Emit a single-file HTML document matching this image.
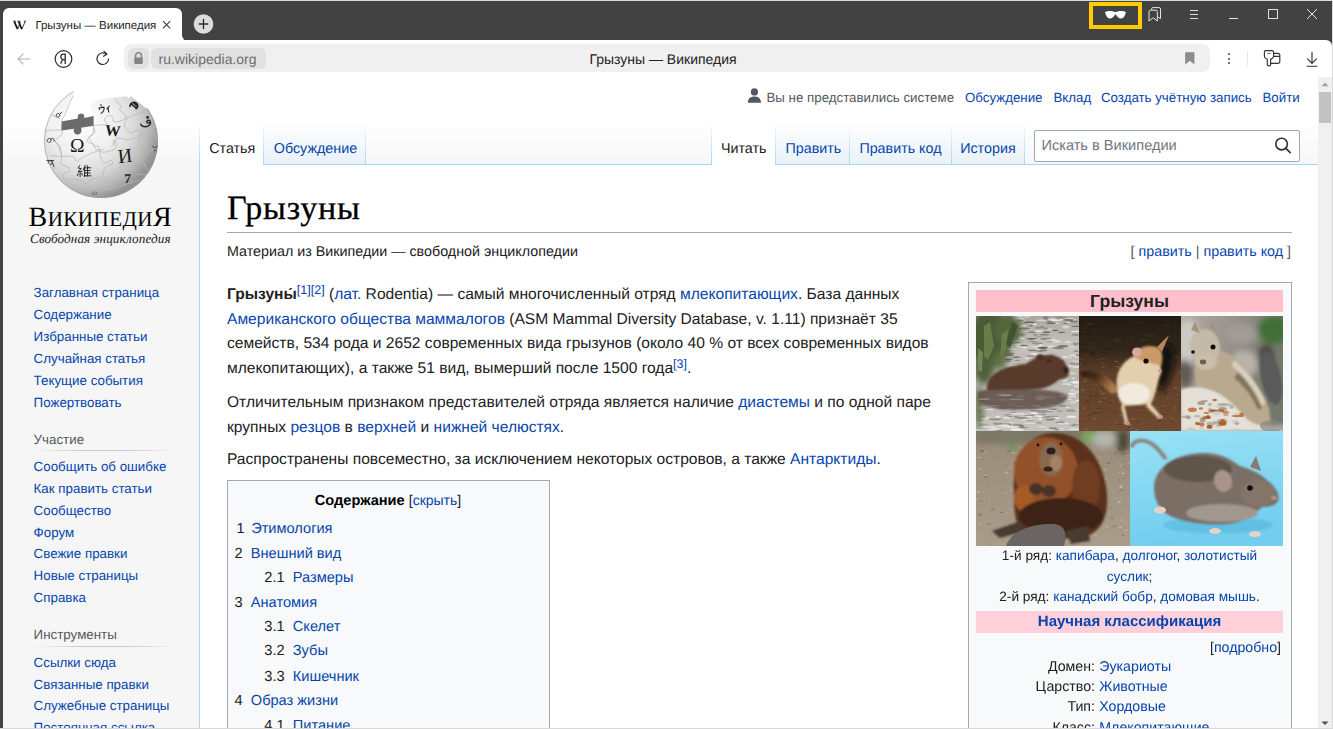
<!DOCTYPE html>
<html><head><meta charset="utf-8"><title>Грызуны — Википедия</title>
<style>
html,body{margin:0;padding:0;}
body{text-rendering:geometricPrecision;width:1333px;height:729px;overflow:hidden;position:relative;background:#424242;font-family:"Liberation Sans",sans-serif;}
.t{position:absolute;white-space:nowrap;}
.r{position:absolute;}
b{font-weight:bold;}
</style></head><body>
<div class="r" style="left:0px;top:0px;width:1333px;height:729px;background:#424242;"></div>
<div class="r" style="left:0px;top:0px;width:1333px;height:1px;background:#d9d9d9;"></div>
<div class="r" style="left:1332px;top:0px;width:1px;height:729px;background:#d9d9d9;"></div>
<div class="r" style="left:0px;top:728px;width:1333px;height:1px;background:#d9d9d9;"></div>
<div class="r" style="left:3px;top:8px;width:179px;height:33px;background:#ffffff;border-radius:6px 6px 0 0;"></div>
<div class="r" style="left:182px;top:34px;width:7px;height:7px;background:#ffffff;"></div>
<div class="r" style="left:182px;top:28px;width:7px;height:13px;background:#424242;border-bottom-left-radius:6px;"></div>
<div class="r" style="left:3px;top:40px;width:1329px;height:37px;background:#ffffff;border-top-right-radius:6px;"></div>
<div class="r" style="left:3px;top:40px;width:179px;height:2px;background:#ffffff;"></div>
<svg class="r" style="left:10px;top:16px" width="20" height="18" viewBox="0 0 20 18"><g fill="none" stroke="#111" stroke-linecap="butt"><path d="M4.3 5.6L7.6 13.2" stroke-width="1.7"/><path d="M7.6 13.2L10.4 5.6" stroke-width="0.8"/><path d="M8.6 5.6L11.8 13.2" stroke-width="1.7"/><path d="M11.8 13.2L15.3 5.3" stroke-width="0.8"/><path d="M3 5.2H6.2M7.4 5.2H10.2M13.8 5.2H16" stroke-width="0.8"/></g></svg>
<div class="t" style="left:35.4px;top:18.62px;font-size:11.5px;line-height:15px;color:#262626;font-family:'Liberation Sans', sans-serif;font-weight:normal;font-style:normal;">Грызуны — Википедия</div>
<svg class="r" style="left:160px;top:18px" width="14" height="14" viewBox="0 0 14 14"><path d="M3 3.2L10.2 10.4M10.2 3.2L3 10.4" stroke="#3a3a3a" stroke-width="1.1"/></svg>
<svg class="r" style="left:192px;top:13px" width="23" height="23" viewBox="0 0 23 23"><circle cx="11.5" cy="11" r="9.8" fill="#dcdcdc"/><path d="M11.5 6v10M6.8 11h9.4" stroke="#1e2a36" stroke-width="1.3"/></svg>
<div class="r" style="left:1089px;top:2px;width:45px;height:19px;background:transparent;border:4px solid #ffcc00;"></div>
<svg class="r" style="left:1100px;top:6px" width="32" height="16" viewBox="0 0 32 16"><path d="M4.8 6.3C6 5.2 9 4.9 11.5 5C13 5.1 14 5.6 14.8 6L16.2 6C17 5.6 18 5.1 19.5 5C22 4.9 25 5.2 26 6.3L25.4 7.8C24.7 11 23 12.5 21 12.5C19 12.5 17.2 11 16.6 9.5L15.5 8.2L14.4 9.5C13.8 11 12 12.5 10 12.5C8 12.5 6.3 11 5.6 7.8Z" fill="#ffffff"/></svg>
<svg class="r" style="left:1147px;top:6px" width="17" height="17" viewBox="0 0 17 17"><path d="M2 15V5.5C2 4.7 2.6 4.2 3.3 4.2H9C9.8 4.2 10.3 4.7 10.3 5.5V15L6.2 11.7Z" fill="none" stroke="#e6e6e6" stroke-width="1"/><path d="M4.6 3.8V2.8C4.6 2.1 5.1 1.6 5.8 1.6H12.2C13 1.6 13.5 2.1 13.5 2.8V12.6L10.6 11" fill="none" stroke="#e6e6e6" stroke-width="1"/></svg>
<div class="r" style="left:1190px;top:10px;width:8px;height:1px;background:#dddddd;"></div>
<div class="r" style="left:1190px;top:14px;width:8px;height:1px;background:#dddddd;"></div>
<div class="r" style="left:1190px;top:18px;width:8px;height:1px;background:#dddddd;"></div>
<div class="r" style="left:1229px;top:18px;width:9px;height:1px;background:#e0e0e0;"></div>
<div class="r" style="left:1268px;top:9px;width:8px;height:8px;background:transparent;border:1px solid #e0e0e0;"></div>
<svg class="r" style="left:1305px;top:7px" width="14" height="14" viewBox="0 0 14 14"><path d="M2 2L12 12M12 2L2 12" stroke="#e6e6e6" stroke-width="1"/></svg>
<svg class="r" style="left:14px;top:49px" width="20" height="20" viewBox="0 0 20 20"><path d="M16 10H4.2M9.5 4.6L4 10l5.5 5.4" fill="none" stroke="#b4b4b4" stroke-width="1.1"/></svg>
<svg class="r" style="left:53px;top:48px" width="22" height="22" viewBox="0 0 22 22"><circle cx="10.5" cy="11" r="8.3" fill="none" stroke="#2a2a2a" stroke-width="1.2"/><path d="M12.2 16V6.2H10.6C8.9 6.2 7.8 7.3 7.8 8.9C7.8 10.2 8.5 11 9.6 11.4L7.6 15.8M12.2 11.6H10" fill="none" stroke="#2a2a2a" stroke-width="1.3"/></svg>
<svg class="r" style="left:94px;top:48px" width="18" height="20" viewBox="0 0 18 20"><path d="M12.6 6.3A5.8 5.8 0 1 0 14.6 10.5" fill="none" stroke="#2a2a2a" stroke-width="1.2"/><path d="M9.6 2.8L12.9 6.1L9.2 8.4" fill="none" stroke="#2a2a2a" stroke-width="1.2"/></svg>
<div class="r" style="left:124px;top:44px;width:1086px;height:28px;background:#f0f0f0;border-radius:7px;"></div>
<div class="r" style="left:128px;top:48px;width:21px;height:21px;background:#e1e1e1;border-radius:6px;"></div>
<svg class="r" style="left:131px;top:50px" width="15" height="17" viewBox="0 0 15 17"><path d="M4.6 8V5.6C4.6 3.9 5.8 2.8 7.5 2.8C9.2 2.8 10.4 3.9 10.4 5.6V8" fill="none" stroke="#858585" stroke-width="1.5"/><rect x="3.2" y="7.6" width="8.6" height="6.4" rx="1" fill="#858585"/></svg>
<div class="r" style="left:151px;top:48px;width:115px;height:21px;background:#e1e1e1;border-radius:6px;"></div>
<div class="t" style="left:158.5px;top:50.15px;font-size:14px;line-height:18px;color:#6e6e6e;font-family:'Liberation Sans', sans-serif;font-weight:normal;font-style:normal;">ru.wikipedia.org</div>
<div class="t" style="left:663px;transform:translateX(-50%);top:50.35px;font-size:14px;line-height:18px;color:#222;font-family:'Liberation Sans', sans-serif;font-weight:normal;font-style:normal;">Грызуны — Википедия</div>
<svg class="r" style="left:1183px;top:50px" width="14" height="16" viewBox="0 0 14 16"><path d="M2.2 2.2H11.4V14.4L6.8 10.8L2.2 14.4Z" fill="#8c8c8c"/></svg>
<div class="r" style="left:1227.6px;top:52.9px;width:2.2px;height:2.2px;border-radius:50%;background:#444"></div>
<div class="r" style="left:1227.6px;top:57.699999999999996px;width:2.2px;height:2.2px;border-radius:50%;background:#444"></div>
<div class="r" style="left:1227.6px;top:62.3px;width:2.2px;height:2.2px;border-radius:50%;background:#444"></div>
<div class="r" style="left:1247px;top:51px;width:1px;height:15px;background:#e8e8e8;"></div>
<svg class="r" style="left:1256px;top:46px" width="32" height="24" viewBox="0 0 32 24"><path d="M9.6 4.6H16C17 4.6 17.6 5.3 17.6 6.3V10.2C17.6 11 17.2 11.6 16.4 12.2L14.6 13.4V18.4C14.6 19.2 13.9 19.8 13 19.8C12.1 19.8 11.3 19.2 11.3 18.4V13.4L9.4 12.1C8.7 11.6 8.4 11 8.4 10.2V6.1C8.4 5.2 8.8 4.6 9.6 4.6Z" fill="none" stroke="#333" stroke-width="1.15"/><path d="M11.2 7.4H14.8" stroke="#555" stroke-width="0.9"/><path d="M17.6 7.3H21.8C23 7.3 23.8 8.1 23.8 9.3V15.4C23.8 16.6 23 17.3 21.8 17.3H14.8M17.6 10.4H23.8" fill="none" stroke="#333" stroke-width="1.15"/></svg>
<svg class="r" style="left:1304px;top:50px" width="16" height="18" viewBox="0 0 16 18"><path d="M8 2V13.4M3.3 8.7L8 13.4L12.7 8.7M2.6 16.2H13.4" fill="none" stroke="#333" stroke-width="1.15"/></svg>
<div class="r" style="left:3px;top:77px;width:1315px;height:651px;background:#f6f6f6;"></div>
<div class="r" style="left:3px;top:77px;width:1315px;height:88px;background:linear-gradient(#ffffff 50%, #f6f6f6 100%);"></div>
<div class="r" style="left:199px;top:164px;width:1119px;height:564px;background:#ffffff;"></div>
<div class="r" style="left:199px;top:121px;width:1px;height:44px;background:linear-gradient(rgba(167,215,249,0), #a7d7f9);"></div>
<div class="r" style="left:199px;top:165px;width:1px;height:563px;background:#a7d7f9;"></div>
<div class="r" style="left:200px;top:164px;width:1118px;height:1px;background:#a7d7f9;"></div>
<div class="r" style="left:200px;top:121px;width:63px;height:44px;background:#ffffff;"></div>
<div class="t" style="left:209.2px;top:139.75px;font-size:14.3px;line-height:19px;color:#202122;font-family:'Liberation Sans', sans-serif;font-weight:normal;font-style:normal;">Статья</div>
<div class="r" style="left:263px;top:121px;width:1px;height:44px;background:linear-gradient(rgba(167,215,249,0) 0, #a7d7f9 100%);"></div>
<div class="r" style="left:264px;top:121px;width:101px;height:44px;background:linear-gradient(to top, #77c1f6 0, #e8f2f8 1px, #ffffff 100%);"></div>
<div class="t" style="left:273.8px;top:139.75px;font-size:14.3px;line-height:19px;color:#0645ad;font-family:'Liberation Sans', sans-serif;font-weight:normal;font-style:normal;">Обсуждение</div>
<div class="r" style="left:365px;top:121px;width:1px;height:44px;background:linear-gradient(rgba(167,215,249,0) 0, #a7d7f9 100%);"></div>
<div class="r" style="left:711px;top:121px;width:1px;height:44px;background:linear-gradient(rgba(167,215,249,0) 0, #a7d7f9 100%);"></div>
<div class="r" style="left:712px;top:121px;width:63px;height:44px;background:#ffffff;"></div>
<div class="t" style="left:720.9px;top:139.75px;font-size:14.3px;line-height:19px;color:#202122;font-family:'Liberation Sans', sans-serif;font-weight:normal;font-style:normal;">Читать</div>
<div class="r" style="left:775px;top:121px;width:1px;height:44px;background:linear-gradient(rgba(167,215,249,0) 0, #a7d7f9 100%);"></div>
<div class="r" style="left:776px;top:121px;width:73px;height:44px;background:linear-gradient(to top, #77c1f6 0, #e8f2f8 1px, #ffffff 100%);"></div>
<div class="t" style="left:785.5px;top:139.75px;font-size:14.3px;line-height:19px;color:#0645ad;font-family:'Liberation Sans', sans-serif;font-weight:normal;font-style:normal;">Править</div>
<div class="r" style="left:849px;top:121px;width:1px;height:44px;background:linear-gradient(rgba(167,215,249,0) 0, #a7d7f9 100%);"></div>
<div class="r" style="left:850px;top:121px;width:101px;height:44px;background:linear-gradient(to top, #77c1f6 0, #e8f2f8 1px, #ffffff 100%);"></div>
<div class="t" style="left:859.4px;top:139.75px;font-size:14.3px;line-height:19px;color:#0645ad;font-family:'Liberation Sans', sans-serif;font-weight:normal;font-style:normal;">Править код</div>
<div class="r" style="left:951px;top:121px;width:1px;height:44px;background:linear-gradient(rgba(167,215,249,0) 0, #a7d7f9 100%);"></div>
<div class="r" style="left:952px;top:121px;width:72px;height:44px;background:linear-gradient(to top, #77c1f6 0, #e8f2f8 1px, #ffffff 100%);"></div>
<div class="t" style="left:960.2px;top:139.75px;font-size:14.3px;line-height:19px;color:#0645ad;font-family:'Liberation Sans', sans-serif;font-weight:normal;font-style:normal;">История</div>
<div class="r" style="left:1024px;top:121px;width:1px;height:44px;background:linear-gradient(rgba(167,215,249,0) 0, #a7d7f9 100%);"></div>
<div class="r" style="left:1034px;top:130px;width:264px;height:30px;background:#ffffff;border:1px solid #a2a9b1;border-radius:2px;box-shadow: inset 0 0 0 1px transparent;"></div>
<div class="t" style="left:1041.4px;top:136.54px;font-size:14.6px;line-height:19px;color:#72777d;font-family:'Liberation Sans', sans-serif;font-weight:normal;font-style:normal;">Искать в Википедии</div>
<svg class="r" style="left:1272px;top:136px" width="22" height="22" viewBox="0 0 22 22"><circle cx="9.6" cy="8" r="5.8" fill="none" stroke="#333" stroke-width="1.65"/><path d="M13.9 12.3L18.2 16.6" stroke="#333" stroke-width="1.8" stroke-linecap="round"/></svg>
<svg class="r" style="left:747px;top:87px" width="15" height="17" viewBox="0 0 15 17"><circle cx="7.4" cy="4.9" r="3.6" fill="#54595d"/><path d="M0.8 15.8C0.8 11.6 3.4 9.6 7.4 9.6C11.4 9.6 14 11.6 14 15.8Z" fill="#54595d"/></svg>
<div class="t" style="left:766.5px;top:88.89px;font-size:13.3px;line-height:17px;color:#54595d;font-family:'Liberation Sans', sans-serif;font-weight:normal;font-style:normal;">Вы не представились системе</div>
<div class="t" style="left:965px;top:88.89px;font-size:13.3px;line-height:17px;color:#0645ad;font-family:'Liberation Sans', sans-serif;font-weight:normal;font-style:normal;">Обсуждение</div>
<div class="t" style="left:1053.5px;top:88.89px;font-size:13.3px;line-height:17px;color:#0645ad;font-family:'Liberation Sans', sans-serif;font-weight:normal;font-style:normal;">Вклад</div>
<div class="t" style="left:1101px;top:88.89px;font-size:13.3px;line-height:17px;color:#0645ad;font-family:'Liberation Sans', sans-serif;font-weight:normal;font-style:normal;">Создать учётную запись</div>
<div class="t" style="left:1262.5px;top:88.89px;font-size:13.3px;line-height:17px;color:#0645ad;font-family:'Liberation Sans', sans-serif;font-weight:normal;font-style:normal;">Войти</div>
<svg class="r" style="left:38px;top:84px" width="126" height="120" viewBox="38 84 126 120">
<defs>
<radialGradient id="gg" cx="82" cy="122" r="80" gradientUnits="userSpaceOnUse">
<stop offset="0" stop-color="#ffffff"/><stop offset="0.4" stop-color="#f0f0f0"/><stop offset="0.65" stop-color="#dadada"/><stop offset="0.85" stop-color="#b8b8b8"/><stop offset="1" stop-color="#909090"/>
</radialGradient>
<clipPath id="gc"><circle cx="101" cy="141" r="57"/></clipPath>
</defs>
<g clip-path="url(#gc)">
<rect x="38" y="84" width="126" height="120" fill="url(#gg)"/>
<g fill="none" stroke="#b9b9b9" stroke-width="0.8" stroke-linejoin="round"><path d="M93.5 125.5 C95.7 125.3 104.8 125.0 106.6 124.1 C108.4 123.2 104.4 121.4 104.5 120.0 C104.6 118.6 105.9 116.5 107.3 115.9 C108.7 115.3 111.7 115.7 112.7 116.6 C113.7 117.5 112.3 120.6 113.4 121.4 C114.5 122.2 116.9 122.0 119.2 121.4 C121.5 120.8 124.4 119.2 127.2 118.0 C130.0 116.8 132.5 115.8 136.0 114.5 C139.5 113.2 146.0 110.8 148.0 110.0"/><path d="M114.8 98.7 C115.5 99.6 117.8 102.8 118.9 104.2 C120.1 105.6 121.6 106.1 121.7 107.0 C121.8 107.9 119.1 108.6 119.6 109.7 C120.0 110.8 123.2 112.3 124.4 113.8 C125.6 115.3 126.5 116.8 126.5 118.6 C126.5 120.4 124.3 122.8 124.4 124.8 C124.5 126.8 126.0 128.9 127.2 130.3 C128.3 131.7 129.8 133.0 131.3 133.0 C132.8 133.0 134.6 130.6 136.0 130.3 C137.4 130.0 139.0 130.1 140.0 131.0 C141.0 131.9 142.2 134.5 142.0 136.0 C141.8 137.5 139.1 138.2 138.8 140.0 C138.6 141.8 139.4 145.4 140.5 146.8 C141.6 148.2 145.3 147.4 145.6 148.5 C145.9 149.6 142.6 151.5 142.2 153.6 C141.8 155.7 141.9 158.2 143.0 161.3 C144.1 164.4 148.0 170.5 149.0 172.3"/><path d="M92.9 125.5 C93.2 126.3 94.8 128.8 94.9 130.3 C95.0 131.8 94.5 133.2 93.5 134.4 C92.5 135.6 88.9 135.8 88.7 137.2 C88.5 138.6 91.1 141.1 92.2 142.6 C93.3 144.1 94.5 145.3 95.6 146.0 C96.7 146.7 98.1 145.0 98.9 146.8 C99.7 148.6 99.8 154.3 100.6 157.0 C101.4 159.7 102.3 162.4 104.0 163.0 C105.7 163.6 109.4 160.3 110.8 160.4 C112.2 160.5 113.3 162.7 112.5 163.8 C111.7 164.9 107.3 165.5 105.7 167.2 C104.1 168.9 103.0 171.9 103.1 174.0 C103.2 176.1 105.4 178.3 106.5 180.0 C107.6 181.7 109.6 182.8 109.9 184.2 C110.2 185.6 109.9 187.8 108.2 188.5 C106.5 189.2 101.7 187.2 99.7 188.5 C97.7 189.8 96.6 194.8 96.0 196.0"/><path d="M113.4 146.0 C113.6 145.1 113.9 142.0 114.8 140.6 C115.7 139.2 116.8 137.9 118.9 137.8 C121.0 137.7 124.4 140.0 127.2 139.9 C130.1 139.8 132.9 138.5 136.0 137.2 C139.1 135.9 142.7 133.9 146.0 132.0 C149.3 130.1 154.3 127.0 156.0 126.0"/><path d="M50.2 155.6 C52.3 155.8 58.8 156.3 62.6 156.5 C66.5 156.7 71.0 155.7 73.3 156.5 C75.6 157.3 75.2 161.1 76.6 161.4 C78.0 161.7 79.6 159.2 81.5 158.1 C83.4 157.0 85.3 156.0 88.1 154.8 C90.8 153.6 95.5 151.4 98.0 151.0 C100.5 150.6 101.1 152.3 103.1 152.3 C105.1 152.3 107.9 151.6 109.9 151.0 C111.9 150.4 113.9 149.8 115.0 148.5 C116.1 147.2 116.4 144.8 116.3 143.4 C116.2 142.0 114.7 139.6 114.2 140.0 C113.7 140.4 113.5 145.0 113.4 146.0"/><path d="M54.3 140.0 C55.0 141.1 57.2 143.8 58.5 146.6 C59.8 149.3 61.4 153.6 61.8 156.5 C62.2 159.4 59.9 162.1 61.0 163.9 C62.1 165.7 66.9 166.0 68.3 167.2 C69.7 168.4 69.9 170.4 69.2 171.3 C68.5 172.2 65.2 171.7 64.2 172.9 C63.2 174.1 62.6 177.0 63.4 178.7 C64.2 180.3 67.0 181.3 69.2 182.8 C71.4 184.3 74.8 185.5 76.6 187.7 C78.4 189.9 79.4 194.6 80.0 196.0"/><path d="M66.7 178.7 C69.0 179.0 77.6 179.5 80.7 180.3 C83.8 181.1 83.8 183.7 85.6 183.6 C87.4 183.5 88.7 180.6 91.4 179.5 C94.1 178.4 100.2 177.4 102.0 177.0"/><path d="M119.3 168.0 C120.0 167.4 121.4 165.1 123.5 164.7 C125.6 164.3 129.9 166.1 132.0 165.5 C134.1 164.9 134.3 162.4 136.3 161.3 C138.3 160.2 141.8 160.1 143.9 158.7 C146.0 157.3 146.8 154.9 149.0 152.8 C151.2 150.7 155.7 147.1 157.0 146.0"/><path d="M134.6 176.6 C135.3 176.2 137.2 174.3 138.8 174.0 C140.4 173.7 142.2 175.2 143.9 174.9 C145.6 174.6 146.7 173.5 149.0 172.3 C151.3 171.2 156.1 168.7 157.5 168.0"/><path d="M45.3 131.0 C46.6 130.8 50.6 130.2 53.2 130.1 C55.8 129.9 59.7 130.1 61.0 130.1"/><path d="M93.6 126.6 C93.4 127.8 93.4 131.9 92.7 133.7 C92.0 135.5 90.1 135.9 89.2 137.2 C88.3 138.5 86.8 140.4 87.4 141.6 C88.0 142.8 91.2 142.9 92.7 144.2 C94.2 145.5 94.3 148.6 96.2 149.5 C98.1 150.4 102.7 149.5 104.0 149.5"/><path d="M61.5 126.6 C61.6 127.8 62.6 131.8 62.0 133.7 C61.4 135.6 58.8 136.6 57.6 138.0 C56.4 139.4 54.6 141.2 54.9 142.4 C55.2 143.6 58.3 143.4 59.3 145.0 C60.3 146.6 60.7 150.1 61.1 152.0 C61.5 153.9 61.7 155.8 61.8 156.5"/><path d="M50.5 114.3 C52.1 115.0 58.6 118.0 60.2 118.7"/><path d="M60.0 192.0 C63.3 191.7 73.3 190.2 80.0 190.0 C86.7 189.8 93.3 191.7 100.0 191.0 C106.7 190.3 113.3 187.8 120.0 186.0 C126.7 184.2 136.7 181.0 140.0 180.0"/><path d="M146.0 108.0 C146.7 109.7 149.8 115.3 150.0 118.0 C150.2 120.7 146.7 122.0 147.0 124.0 C147.3 126.0 150.3 127.3 152.0 130.0 C153.7 132.7 156.2 138.3 157.0 140.0"/></g>
<path d="M73.4 96.3 L70 103 L65.5 114.3 L61.5 121.4" fill="none" stroke="#b5b5b5" stroke-width="1.2"/>
</g>
<circle cx="101" cy="141" r="56.6" fill="none" stroke="#9c9c9c" stroke-width="0.9" opacity="0.7"/>
<path d="M30 84 H73.4 V96.3 L70 103 L65.5 114.3 L61.5 121.4 L93.6 116 L90 105.6 L98 99.4 L126.7 96.3 L128.5 98.5 L131 96 L146 108.2 L172 108 V84 Z" fill="#ffffff" id="wo"/>
<path d="M61.5 121.4 L78 118.6 C77.5 116.5 77.6 114 81 113.6 C84.5 113.6 84.6 116.5 84 118 L93.6 116 L93.6 125.8 L81 127.8 C82 129.5 81.8 134.5 77.5 134.6 C73.8 134.5 73.3 130 74 128.7 L61.5 130.4 Z" fill="#6b6b6b"/>
<path d="M62 128 C60 150 58 170 60 181" fill="none" stroke="none"/>
<g fill="none" stroke="#202020" stroke-linecap="round" stroke-linejoin="round">
<g stroke-width="0.95"><path d="M79.6 165.6L78.3 168.2L81.2 168.6L78 171.8L82.2 171.2M80.1 171.5V176.6M78.2 173.6L77.4 175.6M81.6 173.4L82.6 175.2"/>
<path d="M85.2 165.4L83.4 169.6M84.6 168.4V176.6M87.2 165.6L88 167.2M84.6 167.8H90.8M87.5 167.8V176.2M84.6 170.5H90.2M84.6 173H90.2M84.6 175.8H91"/></g>
<g stroke-width="1.05" transform="rotate(-10 106 108)"><path d="M101.6 103.6V105.2M99.2 106.8V108.4M99.2 106.8H104.2C104.2 109.6 102.8 111.4 100.2 112.4M106.8 109L109.6 106.6M108 108.2V112.6"/></g>
<g stroke-width="1.5"><path d="M130 106.5C130 102.5 134 101.5 136.2 103C138.4 104.5 138.2 107.8 136 108.8M131.5 104.2L136.4 108.2M133.4 102.6L137.8 106.6"/></g>
<g stroke-width="1.4"><path d="M140.8 124.2C141.4 127.2 146.4 127.4 149.4 125.2C151 124 150.8 121.2 149.2 120.4C147.6 119.6 146.2 121.2 147.2 122.6C148.2 123.6 149.8 123.2 150.4 122"/><circle cx="147.6" cy="117.4" r="0.6" fill="#202020"/></g>
<g stroke="#3a3a3a" stroke-width="1.0"><path d="M47.2 141.5C46.8 138.5 49.6 137.6 50.8 139.4C51.8 141 50.4 143 48.8 142.4M50.6 139.6C52 137 54.6 138.2 54 141"/>
<path d="M48.2 163C48 160.4 50.8 159.8 52 161.6C52.8 163 51.6 165 50 164.4M46.8 160.6H53.6M52 161.6L54 166.8"/>
<path d="M152.6 146.2C153.6 148.6 156.6 148.2 157 146M154.2 150.4L154.6 150.6M155.8 150.6L156.2 150.8"/>
<path d="M56.2 116.4C55.6 113.6 58.6 112.6 59.6 114.4C60.4 116 59 117.4 57.8 116.8M59.6 114.4L61.6 112.2"/></g>
</g>
<text x="77.3" y="152.4" font-family="Liberation Serif" font-size="19.5" text-anchor="middle" fill="#1a1a1a">Ω</text>
<text x="112.7" y="135.9" font-family="Liberation Serif" font-size="15.5" font-weight="bold" text-anchor="middle" fill="#1a1a1a" transform="rotate(6 112.7 131)">W</text>
<text x="125" y="162.6" font-family="Liberation Serif" font-size="20" text-anchor="middle" fill="#1a1a1a" transform="rotate(-6 125 156)">И</text>
<text x="127.5" y="183.4" font-family="Liberation Serif" font-weight="bold" font-size="13.5" text-anchor="middle" fill="#1e1e1e">7</text>
<text x="92" y="195" font-family="Liberation Serif" font-size="8" fill="#555">ω</text>
</svg>
<div class="t" style="left:29px;top:200px;width:143px;height:30px;color:#000;white-space:nowrap;"></div>
<div class="t" style="left:28.5px;top:200.05px;font-size:28px;line-height:36px;color:#000;font-family:'Liberation Serif', serif;font-weight:normal;font-style:normal;letter-spacing:0.5px;"><span>В</span><span style="font-size:21px">ИКИПЕДИ</span><span>Я</span></div>
<div class="t" style="left:30px;top:230.04px;font-size:13.2px;line-height:17px;color:#222;font-family:'Liberation Serif', serif;font-weight:normal;font-style:italic;letter-spacing:0.08px;">Свободная энциклопедия</div>
<div class="t" style="left:33.6px;top:284.27px;font-size:13.35px;line-height:17px;color:#0645ad;font-family:'Liberation Sans', sans-serif;font-weight:normal;font-style:normal;">Заглавная страница</div>
<div class="t" style="left:33.6px;top:306.13px;font-size:13.35px;line-height:17px;color:#0645ad;font-family:'Liberation Sans', sans-serif;font-weight:normal;font-style:normal;">Содержание</div>
<div class="t" style="left:33.6px;top:327.99px;font-size:13.35px;line-height:17px;color:#0645ad;font-family:'Liberation Sans', sans-serif;font-weight:normal;font-style:normal;">Избранные статьи</div>
<div class="t" style="left:33.6px;top:349.85px;font-size:13.35px;line-height:17px;color:#0645ad;font-family:'Liberation Sans', sans-serif;font-weight:normal;font-style:normal;">Случайная статья</div>
<div class="t" style="left:33.6px;top:371.71px;font-size:13.35px;line-height:17px;color:#0645ad;font-family:'Liberation Sans', sans-serif;font-weight:normal;font-style:normal;">Текущие события</div>
<div class="t" style="left:33.6px;top:393.57px;font-size:13.35px;line-height:17px;color:#0645ad;font-family:'Liberation Sans', sans-serif;font-weight:normal;font-style:normal;">Пожертвовать</div>
<div class="t" style="left:33.6px;top:430.57px;font-size:13.35px;line-height:17px;color:#54595d;font-family:'Liberation Sans', sans-serif;font-weight:normal;font-style:normal;">Участие</div>
<div class="r" style="left:33px;top:450px;width:144px;height:1px;background:linear-gradient(to right, rgba(200,204,209,0) 0, #c8ccd1 33%, #c8ccd1 66%, rgba(200,204,209,0) 100%);"></div>
<div class="t" style="left:33.6px;top:458.37px;font-size:13.35px;line-height:17px;color:#0645ad;font-family:'Liberation Sans', sans-serif;font-weight:normal;font-style:normal;">Сообщить об ошибке</div>
<div class="t" style="left:33.6px;top:480.09px;font-size:13.35px;line-height:17px;color:#0645ad;font-family:'Liberation Sans', sans-serif;font-weight:normal;font-style:normal;">Как править статьи</div>
<div class="t" style="left:33.6px;top:501.81px;font-size:13.35px;line-height:17px;color:#0645ad;font-family:'Liberation Sans', sans-serif;font-weight:normal;font-style:normal;">Сообщество</div>
<div class="t" style="left:33.6px;top:523.53px;font-size:13.35px;line-height:17px;color:#0645ad;font-family:'Liberation Sans', sans-serif;font-weight:normal;font-style:normal;">Форум</div>
<div class="t" style="left:33.6px;top:545.25px;font-size:13.35px;line-height:17px;color:#0645ad;font-family:'Liberation Sans', sans-serif;font-weight:normal;font-style:normal;">Свежие правки</div>
<div class="t" style="left:33.6px;top:566.97px;font-size:13.35px;line-height:17px;color:#0645ad;font-family:'Liberation Sans', sans-serif;font-weight:normal;font-style:normal;">Новые страницы</div>
<div class="t" style="left:33.6px;top:588.69px;font-size:13.35px;line-height:17px;color:#0645ad;font-family:'Liberation Sans', sans-serif;font-weight:normal;font-style:normal;">Справка</div>
<div class="t" style="left:33.6px;top:625.67px;font-size:13.35px;line-height:17px;color:#54595d;font-family:'Liberation Sans', sans-serif;font-weight:normal;font-style:normal;">Инструменты</div>
<div class="r" style="left:33px;top:646px;width:144px;height:1px;background:linear-gradient(to right, rgba(200,204,209,0) 0, #c8ccd1 33%, #c8ccd1 66%, rgba(200,204,209,0) 100%);"></div>
<div class="t" style="left:33.6px;top:653.87px;font-size:13.35px;line-height:17px;color:#0645ad;font-family:'Liberation Sans', sans-serif;font-weight:normal;font-style:normal;">Ссылки сюда</div>
<div class="t" style="left:33.6px;top:675.67px;font-size:13.35px;line-height:17px;color:#0645ad;font-family:'Liberation Sans', sans-serif;font-weight:normal;font-style:normal;">Связанные правки</div>
<div class="t" style="left:33.6px;top:697.47px;font-size:13.35px;line-height:17px;color:#0645ad;font-family:'Liberation Sans', sans-serif;font-weight:normal;font-style:normal;">Служебные страницы</div>
<div class="t" style="left:33.6px;top:719.27px;font-size:13.35px;line-height:17px;color:#0645ad;font-family:'Liberation Sans', sans-serif;font-weight:normal;font-style:normal;">Постоянная ссылка</div>
<div class="t" style="left:227px;top:187.33px;font-size:34px;line-height:44px;color:#000;font-family:'Liberation Serif', serif;font-weight:normal;font-style:normal;letter-spacing:0.8px;-webkit-text-stroke:0.3px #000;">Грызуны</div>
<div class="r" style="left:227px;top:232px;width:1065px;height:1px;background:#a2a9b1;"></div>
<div class="t" style="left:227px;top:243.35px;font-size:14.3px;line-height:19px;color:#202122;font-family:'Liberation Sans', sans-serif;font-weight:normal;font-style:normal;">Материал из Википедии — свободной энциклопедии</div>
<div class="t" style="right:42px;top:243.15px;font-size:14.3px;line-height:19px;color:#202122;font-family:'Liberation Sans', sans-serif;font-weight:normal;font-style:normal;"><span style="color:#54595d">[</span> <span style="color:#0645ad">править</span> <span style="color:#54595d">|</span> <span style="color:#0645ad">править код</span> <span style="color:#54595d">]</span></div>
<div class="t" style="left:227px;top:285.10px;font-size:15.58px;line-height:20px;color:#202122;font-family:'Liberation Sans', sans-serif;font-weight:normal;font-style:normal;"><b>Грызуны́</b><sup style="font-size:12.5px;line-height:0;vertical-align:5.4px;color:#0645ad">[1]</sup><sup style="font-size:12.5px;line-height:0;vertical-align:5.4px;color:#0645ad">[2]</sup> (<span style="color:#0645ad">лат.</span> Rodentia) — самый многочисленный отряд <span style="color:#0645ad">млекопитающих</span>. База данных</div>
<div class="t" style="left:227px;top:309.70px;font-size:15.58px;line-height:20px;color:#202122;font-family:'Liberation Sans', sans-serif;font-weight:normal;font-style:normal;"><span style="color:#0645ad">Американского общества маммалогов</span> (ASM Mammal Diversity Database, v. 1.11) признаёт 35</div>
<div class="t" style="left:227px;top:334.30px;font-size:15.58px;line-height:20px;color:#202122;font-family:'Liberation Sans', sans-serif;font-weight:normal;font-style:normal;">семейств, 534 рода и 2652 современных вида грызунов (около 40 % от всех современных видов</div>
<div class="t" style="left:227px;top:358.90px;font-size:15.58px;line-height:20px;color:#202122;font-family:'Liberation Sans', sans-serif;font-weight:normal;font-style:normal;">млекопитающих), а также 51 вид, вымерший после 1500 года<sup style="font-size:12.5px;line-height:0;vertical-align:5.4px;color:#0645ad">[3]</sup>.</div>
<div class="t" style="left:227px;top:392.80px;font-size:15.58px;line-height:20px;color:#202122;font-family:'Liberation Sans', sans-serif;font-weight:normal;font-style:normal;">Отличительным признаком представителей отряда является наличие <span style="color:#0645ad">диастемы</span> и по одной паре</div>
<div class="t" style="left:227px;top:417.60px;font-size:15.58px;line-height:20px;color:#202122;font-family:'Liberation Sans', sans-serif;font-weight:normal;font-style:normal;">крупных <span style="color:#0645ad">резцов</span> в <span style="color:#0645ad">верхней</span> и <span style="color:#0645ad">нижней челюстях</span>.</div>
<div class="t" style="left:227px;top:450.20px;font-size:15.58px;line-height:20px;color:#202122;font-family:'Liberation Sans', sans-serif;font-weight:normal;font-style:normal;">Распространены повсеместно, за исключением некоторых островов, а также <span style="color:#0645ad">Антарктиды</span>.</div>
<div class="r" style="left:227px;top:480px;width:321px;height:260px;background:#f8f9fa;border:1px solid #a2a9b1;"></div>
<div class="t" style="left:388px;transform:translateX(-50%);top:490.64px;font-size:14.6px;line-height:19px;color:#202122;font-family:'Liberation Sans', sans-serif;font-weight:normal;font-style:normal;"><b style="color:#000">Содержание</b> <span style="font-size:14px">[<span style="color:#0645ad">скрыть</span>]</span></div>
<div class="t" style="left:236.5px;top:519.94px;font-size:14.6px;line-height:19px;color:#202122;font-family:'Liberation Sans', sans-serif;font-weight:normal;font-style:normal;">1</div>
<div class="t" style="left:251.2px;top:519.94px;font-size:14.6px;line-height:19px;color:#0645ad;font-family:'Liberation Sans', sans-serif;font-weight:normal;font-style:normal;">Этимология</div>
<div class="t" style="left:234.5px;top:544.94px;font-size:14.6px;line-height:19px;color:#202122;font-family:'Liberation Sans', sans-serif;font-weight:normal;font-style:normal;">2</div>
<div class="t" style="left:250.8px;top:544.94px;font-size:14.6px;line-height:19px;color:#0645ad;font-family:'Liberation Sans', sans-serif;font-weight:normal;font-style:normal;">Внешний вид</div>
<div class="t" style="left:264.3px;top:569.04px;font-size:14.6px;line-height:19px;color:#202122;font-family:'Liberation Sans', sans-serif;font-weight:normal;font-style:normal;">2.1</div>
<div class="t" style="left:292.8px;top:569.04px;font-size:14.6px;line-height:19px;color:#0645ad;font-family:'Liberation Sans', sans-serif;font-weight:normal;font-style:normal;">Размеры</div>
<div class="t" style="left:234.5px;top:594.14px;font-size:14.6px;line-height:19px;color:#202122;font-family:'Liberation Sans', sans-serif;font-weight:normal;font-style:normal;">3</div>
<div class="t" style="left:250.8px;top:594.14px;font-size:14.6px;line-height:19px;color:#0645ad;font-family:'Liberation Sans', sans-serif;font-weight:normal;font-style:normal;">Анатомия</div>
<div class="t" style="left:264.3px;top:618.24px;font-size:14.6px;line-height:19px;color:#202122;font-family:'Liberation Sans', sans-serif;font-weight:normal;font-style:normal;">3.1</div>
<div class="t" style="left:292.8px;top:618.24px;font-size:14.6px;line-height:19px;color:#0645ad;font-family:'Liberation Sans', sans-serif;font-weight:normal;font-style:normal;">Скелет</div>
<div class="t" style="left:264.3px;top:642.44px;font-size:14.6px;line-height:19px;color:#202122;font-family:'Liberation Sans', sans-serif;font-weight:normal;font-style:normal;">3.2</div>
<div class="t" style="left:292.8px;top:642.44px;font-size:14.6px;line-height:19px;color:#0645ad;font-family:'Liberation Sans', sans-serif;font-weight:normal;font-style:normal;">Зубы</div>
<div class="t" style="left:264.3px;top:667.54px;font-size:14.6px;line-height:19px;color:#202122;font-family:'Liberation Sans', sans-serif;font-weight:normal;font-style:normal;">3.3</div>
<div class="t" style="left:292.8px;top:667.54px;font-size:14.6px;line-height:19px;color:#0645ad;font-family:'Liberation Sans', sans-serif;font-weight:normal;font-style:normal;">Кишечник</div>
<div class="t" style="left:234.5px;top:692.24px;font-size:14.6px;line-height:19px;color:#202122;font-family:'Liberation Sans', sans-serif;font-weight:normal;font-style:normal;">4</div>
<div class="t" style="left:250.8px;top:692.24px;font-size:14.6px;line-height:19px;color:#0645ad;font-family:'Liberation Sans', sans-serif;font-weight:normal;font-style:normal;">Образ жизни</div>
<div class="t" style="left:264.3px;top:716.74px;font-size:14.6px;line-height:19px;color:#202122;font-family:'Liberation Sans', sans-serif;font-weight:normal;font-style:normal;">4.1</div>
<div class="t" style="left:292.8px;top:716.74px;font-size:14.6px;line-height:19px;color:#0645ad;font-family:'Liberation Sans', sans-serif;font-weight:normal;font-style:normal;">Питание</div>
<div class="r" style="left:968px;top:282px;width:322px;height:460px;background:#f8f9fa;border:1px solid #a2a9b1;"></div>
<div class="r" style="left:976px;top:290px;width:307px;height:22px;background:#ffc0cb;"></div>
<div class="t" style="left:1129.5px;transform:translateX(-50%);top:290.00px;font-size:17.6px;line-height:23px;color:#202122;font-family:'Liberation Sans', sans-serif;font-weight:normal;font-style:normal;"><b>Грызуны</b></div>
<svg class="r" style="left:976px;top:316px" width="307" height="230" viewBox="0 0 307 230">
<defs>
<filter id="b1" x="-30%" y="-30%" width="160%" height="160%"><feGaussianBlur stdDeviation="1.3"/></filter>
<filter id="b2" x="-30%" y="-30%" width="160%" height="160%"><feGaussianBlur stdDeviation="3"/></filter>
<filter id="b05" x="-30%" y="-30%" width="160%" height="160%"><feGaussianBlur stdDeviation="0.55"/></filter>
<clipPath id="c1"><rect x="0" y="0" width="103" height="115"/></clipPath>
<clipPath id="c2"><rect x="103" y="0" width="102" height="115"/></clipPath>
<clipPath id="c3"><rect x="205" y="0" width="102" height="115"/></clipPath>
<clipPath id="c4"><rect x="0" y="115" width="154" height="115"/></clipPath>
<clipPath id="c5"><rect x="154" y="115" width="153" height="115"/></clipPath>
<linearGradient id="wat" x1="0" y1="0" x2="0" y2="1"><stop offset="0" stop-color="#a9a69e"/><stop offset="0.25" stop-color="#c4c2bc"/><stop offset="0.55" stop-color="#b8b4ae"/><stop offset="1" stop-color="#c6c4c0"/></linearGradient>
<linearGradient id="gnd" x1="0" y1="0" x2="0" y2="1"><stop offset="0" stop-color="#221b14"/><stop offset="0.3" stop-color="#33271b"/><stop offset="0.5" stop-color="#5e3f29"/><stop offset="1" stop-color="#6e4a30"/></linearGradient>
<linearGradient id="sqb" x1="0" y1="0" x2="1" y2="0.3"><stop offset="0" stop-color="#b2aca4"/><stop offset="0.5" stop-color="#96918a"/><stop offset="1" stop-color="#74786a"/></linearGradient>
<linearGradient id="bvg" x1="0" y1="0" x2="0" y2="1"><stop offset="0" stop-color="#7e7868"/><stop offset="0.15" stop-color="#9c8e7c"/><stop offset="1" stop-color="#aa9c8a"/></linearGradient>
<linearGradient id="msb" x1="0" y1="0" x2="0.2" y2="1"><stop offset="0" stop-color="#98e2f6"/><stop offset="1" stop-color="#72cdee"/></linearGradient>
<linearGradient id="tailg" x1="0" y1="0" x2="1" y2="0.4"><stop offset="0" stop-color="#2a1c12"/><stop offset="0.45" stop-color="#4a2e1a"/><stop offset="1" stop-color="#b07a48"/></linearGradient>
</defs>
<g clip-path="url(#c1)"><rect x="0" y="0" width="103" height="115" fill="url(#wat)"/><g filter="url(#b05)"><ellipse cx="53.6" cy="7.5" rx="2.3" ry="0.8" fill="#e8e8e6" opacity="0.65"/><ellipse cx="34.2" cy="25.4" rx="2.3" ry="0.8" fill="#e8e8e6" opacity="0.60"/><ellipse cx="70.2" cy="3.0" rx="2.5" ry="0.6" fill="#55524a" opacity="0.75"/><ellipse cx="99.2" cy="28.9" rx="2.2" ry="0.6" fill="#7e7a70" opacity="0.72"/><ellipse cx="39.7" cy="21.0" rx="2.5" ry="0.7" fill="#55524a" opacity="0.83"/><ellipse cx="43.2" cy="29.1" rx="3.5" ry="0.8" fill="#f4f4f2" opacity="0.53"/><ellipse cx="34.4" cy="10.3" rx="3.7" ry="0.7" fill="#55524a" opacity="0.73"/><ellipse cx="63.1" cy="15.0" rx="4.8" ry="0.6" fill="#f4f4f2" opacity="0.73"/><ellipse cx="68.3" cy="43.8" rx="3.2" ry="1.1" fill="#7e7a70" opacity="0.55"/><ellipse cx="60.5" cy="37.9" rx="5.7" ry="0.8" fill="#f4f4f2" opacity="0.88"/><ellipse cx="35.7" cy="27.9" rx="3.4" ry="0.7" fill="#6a665c" opacity="0.70"/><ellipse cx="88.2" cy="3.4" rx="5.8" ry="0.8" fill="#e8e8e6" opacity="0.77"/><ellipse cx="34.4" cy="35.1" rx="6.0" ry="1.0" fill="#55524a" opacity="0.61"/><ellipse cx="58.2" cy="33.4" rx="5.8" ry="0.7" fill="#e8e8e6" opacity="0.74"/><ellipse cx="66.0" cy="10.9" rx="2.5" ry="0.6" fill="#6a665c" opacity="0.66"/><ellipse cx="93.6" cy="4.0" rx="3.6" ry="0.7" fill="#7e7a70" opacity="0.55"/><ellipse cx="61.4" cy="27.5" rx="5.9" ry="0.9" fill="#7e7a70" opacity="0.65"/><ellipse cx="46.8" cy="4.1" rx="2.9" ry="0.6" fill="#f4f4f2" opacity="0.69"/><ellipse cx="73.0" cy="13.1" rx="2.6" ry="0.8" fill="#e8e8e6" opacity="0.74"/><ellipse cx="53.3" cy="6.3" rx="5.8" ry="0.9" fill="#55524a" opacity="0.80"/><ellipse cx="63.3" cy="43.5" rx="3.6" ry="0.7" fill="#55524a" opacity="0.54"/><ellipse cx="76.3" cy="3.1" rx="5.9" ry="0.8" fill="#e8e8e6" opacity="0.54"/><ellipse cx="73.9" cy="5.1" rx="2.6" ry="0.6" fill="#55524a" opacity="0.65"/><ellipse cx="31.9" cy="43.7" rx="3.5" ry="0.9" fill="#55524a" opacity="0.88"/><ellipse cx="74.0" cy="23.7" rx="5.4" ry="1.1" fill="#e8e8e6" opacity="0.69"/><ellipse cx="65.3" cy="4.3" rx="5.0" ry="0.9" fill="#e8e8e6" opacity="0.69"/><ellipse cx="80.5" cy="25.8" rx="5.8" ry="0.8" fill="#f4f4f2" opacity="0.56"/><ellipse cx="69.7" cy="1.4" rx="3.2" ry="0.9" fill="#55524a" opacity="0.54"/><ellipse cx="91.7" cy="25.9" rx="3.4" ry="0.6" fill="#f4f4f2" opacity="0.72"/><ellipse cx="66.7" cy="31.8" rx="5.2" ry="1.1" fill="#55524a" opacity="0.84"/><ellipse cx="88.8" cy="40.9" rx="2.8" ry="0.8" fill="#f4f4f2" opacity="0.79"/><ellipse cx="102.2" cy="39.5" rx="3.0" ry="0.9" fill="#7e7a70" opacity="0.88"/><ellipse cx="62.6" cy="46.9" rx="5.8" ry="0.7" fill="#6a665c" opacity="0.59"/><ellipse cx="46.6" cy="9.8" rx="3.9" ry="1.1" fill="#f4f4f2" opacity="0.74"/><ellipse cx="30.1" cy="45.5" rx="5.2" ry="0.6" fill="#6a665c" opacity="0.76"/><ellipse cx="96.4" cy="39.1" rx="3.9" ry="0.6" fill="#f4f4f2" opacity="0.82"/><ellipse cx="54.3" cy="40.0" rx="3.9" ry="0.9" fill="#7e7a70" opacity="0.53"/><ellipse cx="41.6" cy="49.7" rx="2.6" ry="1.0" fill="#e8e8e6" opacity="0.82"/><ellipse cx="40.7" cy="41.3" rx="4.6" ry="0.7" fill="#7e7a70" opacity="0.72"/><ellipse cx="39.6" cy="0.7" rx="4.1" ry="1.1" fill="#e8e8e6" opacity="0.67"/><ellipse cx="93.6" cy="41.3" rx="2.1" ry="0.6" fill="#f4f4f2" opacity="0.70"/><ellipse cx="85.7" cy="16.3" rx="3.7" ry="0.6" fill="#55524a" opacity="0.86"/><ellipse cx="55.8" cy="22.9" rx="5.3" ry="0.8" fill="#55524a" opacity="0.83"/><ellipse cx="94.1" cy="6.5" rx="4.1" ry="0.5" fill="#f4f4f2" opacity="0.68"/><ellipse cx="43.4" cy="0.2" rx="2.7" ry="0.8" fill="#f4f4f2" opacity="0.79"/><ellipse cx="70.6" cy="16.3" rx="4.1" ry="0.8" fill="#55524a" opacity="0.81"/><ellipse cx="94.5" cy="2.8" rx="3.1" ry="1.0" fill="#f4f4f2" opacity="0.70"/><ellipse cx="71.0" cy="38.0" rx="3.8" ry="0.9" fill="#e8e8e6" opacity="0.70"/><ellipse cx="67.4" cy="34.6" rx="4.0" ry="1.0" fill="#7e7a70" opacity="0.70"/><ellipse cx="48.1" cy="26.2" rx="5.7" ry="1.0" fill="#6a665c" opacity="0.58"/><ellipse cx="62.7" cy="20.8" rx="3.8" ry="0.5" fill="#7e7a70" opacity="0.60"/><ellipse cx="35.3" cy="33.5" rx="5.6" ry="0.6" fill="#e8e8e6" opacity="0.79"/><ellipse cx="78.2" cy="7.1" rx="5.9" ry="0.6" fill="#f4f4f2" opacity="0.88"/><ellipse cx="59.1" cy="24.4" rx="2.6" ry="0.8" fill="#f4f4f2" opacity="0.71"/><ellipse cx="54.8" cy="9.8" rx="2.4" ry="0.7" fill="#6a665c" opacity="0.64"/><ellipse cx="63.5" cy="35.2" rx="3.3" ry="0.9" fill="#7e7a70" opacity="0.70"/><ellipse cx="34.7" cy="49.3" rx="5.9" ry="0.6" fill="#f4f4f2" opacity="0.61"/><ellipse cx="32.9" cy="38.9" rx="5.0" ry="1.0" fill="#6a665c" opacity="0.84"/><ellipse cx="79.3" cy="47.3" rx="2.6" ry="1.1" fill="#7e7a70" opacity="0.73"/><ellipse cx="81.1" cy="4.5" rx="5.2" ry="0.6" fill="#e8e8e6" opacity="0.86"/><ellipse cx="49.6" cy="0.8" rx="5.2" ry="0.6" fill="#e8e8e6" opacity="0.84"/><ellipse cx="34.9" cy="43.1" rx="2.0" ry="1.1" fill="#7e7a70" opacity="0.67"/><ellipse cx="96.8" cy="31.1" rx="4.1" ry="0.6" fill="#e8e8e6" opacity="0.54"/><ellipse cx="41.8" cy="2.5" rx="5.7" ry="0.9" fill="#f4f4f2" opacity="0.71"/><ellipse cx="45.0" cy="22.3" rx="3.1" ry="1.0" fill="#f4f4f2" opacity="0.90"/><ellipse cx="32.7" cy="0.9" rx="4.2" ry="0.6" fill="#55524a" opacity="0.69"/><ellipse cx="98.2" cy="5.3" rx="4.6" ry="0.8" fill="#7e7a70" opacity="0.86"/><ellipse cx="100.8" cy="15.4" rx="5.9" ry="0.7" fill="#f4f4f2" opacity="0.83"/><ellipse cx="81.6" cy="31.8" rx="6.0" ry="1.1" fill="#7e7a70" opacity="0.83"/><ellipse cx="31.0" cy="31.3" rx="3.7" ry="0.5" fill="#6a665c" opacity="0.77"/><ellipse cx="57.8" cy="25.3" rx="4.4" ry="0.9" fill="#6a665c" opacity="0.52"/><ellipse cx="43.5" cy="13.5" rx="3.1" ry="1.1" fill="#e8e8e6" opacity="0.89"/><ellipse cx="69.9" cy="12.2" rx="2.9" ry="0.6" fill="#6a665c" opacity="0.63"/><ellipse cx="36.1" cy="13.9" rx="3.0" ry="1.0" fill="#f4f4f2" opacity="0.54"/><ellipse cx="89.6" cy="7.2" rx="2.2" ry="0.5" fill="#55524a" opacity="0.62"/><ellipse cx="47.0" cy="29.3" rx="5.4" ry="0.6" fill="#55524a" opacity="0.86"/><ellipse cx="87.2" cy="29.8" rx="4.9" ry="0.8" fill="#6a665c" opacity="0.61"/><ellipse cx="75.2" cy="7.2" rx="4.5" ry="0.9" fill="#55524a" opacity="0.82"/><ellipse cx="40.2" cy="26.2" rx="4.3" ry="1.0" fill="#55524a" opacity="0.51"/><ellipse cx="80.1" cy="39.9" rx="2.3" ry="0.5" fill="#f4f4f2" opacity="0.75"/><ellipse cx="100.0" cy="18.8" rx="4.2" ry="0.9" fill="#7e7a70" opacity="0.75"/><ellipse cx="79.7" cy="24.5" rx="3.8" ry="0.5" fill="#e8e8e6" opacity="0.87"/><ellipse cx="95.5" cy="4.6" rx="2.3" ry="0.9" fill="#55524a" opacity="0.60"/><ellipse cx="35.4" cy="13.3" rx="2.9" ry="0.9" fill="#f4f4f2" opacity="0.68"/><ellipse cx="91.7" cy="3.8" rx="5.1" ry="0.9" fill="#6a665c" opacity="0.76"/><ellipse cx="35.7" cy="7.4" rx="4.6" ry="0.9" fill="#6a665c" opacity="0.75"/><ellipse cx="39.7" cy="24.1" rx="3.1" ry="0.9" fill="#7e7a70" opacity="0.78"/><ellipse cx="79.3" cy="14.5" rx="3.1" ry="0.8" fill="#55524a" opacity="0.81"/><ellipse cx="102.5" cy="27.5" rx="5.9" ry="1.1" fill="#6a665c" opacity="0.51"/><ellipse cx="63.5" cy="41.0" rx="6.0" ry="0.7" fill="#7e7a70" opacity="0.87"/><ellipse cx="97.9" cy="3.7" rx="2.6" ry="0.8" fill="#e8e8e6" opacity="0.88"/><ellipse cx="39.7" cy="41.0" rx="3.1" ry="0.6" fill="#55524a" opacity="0.65"/><ellipse cx="66.3" cy="43.8" rx="2.1" ry="0.5" fill="#7e7a70" opacity="0.70"/><ellipse cx="62.9" cy="15.1" rx="3.7" ry="0.7" fill="#f4f4f2" opacity="0.55"/><ellipse cx="54.2" cy="16.2" rx="5.4" ry="0.6" fill="#6a665c" opacity="0.87"/><ellipse cx="82.1" cy="45.1" rx="3.0" ry="0.5" fill="#6a665c" opacity="0.66"/><ellipse cx="93.5" cy="3.8" rx="5.0" ry="1.0" fill="#7e7a70" opacity="0.61"/><ellipse cx="33.8" cy="33.1" rx="3.0" ry="0.7" fill="#f4f4f2" opacity="0.70"/><ellipse cx="43.9" cy="18.7" rx="5.5" ry="1.0" fill="#7e7a70" opacity="0.75"/><ellipse cx="96.7" cy="47.0" rx="2.8" ry="0.5" fill="#55524a" opacity="0.87"/><ellipse cx="60.0" cy="30.7" rx="4.6" ry="0.7" fill="#f4f4f2" opacity="0.52"/><ellipse cx="97.7" cy="6.4" rx="3.7" ry="0.7" fill="#7e7a70" opacity="0.60"/><ellipse cx="83.9" cy="32.6" rx="4.6" ry="0.7" fill="#7e7a70" opacity="0.72"/><ellipse cx="58.8" cy="8.4" rx="2.3" ry="0.8" fill="#f4f4f2" opacity="0.82"/><ellipse cx="70.2" cy="22.6" rx="6.0" ry="0.8" fill="#6a665c" opacity="0.56"/><ellipse cx="44.0" cy="4.5" rx="4.2" ry="0.7" fill="#6a665c" opacity="0.65"/><ellipse cx="89.1" cy="10.1" rx="5.0" ry="0.7" fill="#e8e8e6" opacity="0.67"/><ellipse cx="68.3" cy="18.8" rx="5.0" ry="0.8" fill="#6a665c" opacity="0.73"/><ellipse cx="56.3" cy="34.3" rx="4.5" ry="1.0" fill="#55524a" opacity="0.59"/><ellipse cx="49.8" cy="12.4" rx="4.6" ry="0.8" fill="#7e7a70" opacity="0.62"/><ellipse cx="89.4" cy="48.4" rx="2.1" ry="0.9" fill="#f4f4f2" opacity="0.86"/><ellipse cx="64.5" cy="29.4" rx="2.3" ry="1.1" fill="#e8e8e6" opacity="0.87"/><ellipse cx="68.5" cy="23.4" rx="3.0" ry="0.6" fill="#7e7a70" opacity="0.56"/><ellipse cx="68.1" cy="34.1" rx="2.3" ry="1.0" fill="#7e7a70" opacity="0.50"/><ellipse cx="39.2" cy="28.5" rx="4.6" ry="0.7" fill="#e8e8e6" opacity="0.55"/><ellipse cx="48.4" cy="31.8" rx="2.4" ry="0.7" fill="#e8e8e6" opacity="0.88"/><ellipse cx="44.0" cy="13.0" rx="2.0" ry="0.8" fill="#55524a" opacity="0.90"/><ellipse cx="50.3" cy="15.8" rx="3.9" ry="0.6" fill="#f4f4f2" opacity="0.60"/><ellipse cx="100.1" cy="35.2" rx="2.2" ry="0.6" fill="#6a665c" opacity="0.85"/><ellipse cx="77.2" cy="4.1" rx="4.7" ry="1.1" fill="#f4f4f2" opacity="0.59"/><ellipse cx="32.5" cy="16.9" rx="3.4" ry="0.7" fill="#7e7a70" opacity="0.50"/><ellipse cx="51.3" cy="42.3" rx="2.8" ry="1.1" fill="#e8e8e6" opacity="0.62"/><ellipse cx="89.9" cy="11.5" rx="3.1" ry="1.0" fill="#f4f4f2" opacity="0.54"/><ellipse cx="75.5" cy="30.5" rx="3.9" ry="1.0" fill="#f4f4f2" opacity="0.52"/><ellipse cx="73.4" cy="46.1" rx="2.9" ry="1.1" fill="#e8e8e6" opacity="0.56"/><ellipse cx="33.8" cy="3.0" rx="3.8" ry="0.9" fill="#7e7a70" opacity="0.63"/><ellipse cx="38.3" cy="4.0" rx="3.3" ry="0.6" fill="#f4f4f2" opacity="0.87"/><ellipse cx="84.5" cy="1.6" rx="5.4" ry="1.1" fill="#7e7a70" opacity="0.68"/><ellipse cx="38.0" cy="3.9" rx="3.4" ry="1.1" fill="#e8e8e6" opacity="0.55"/><ellipse cx="100.4" cy="10.4" rx="5.1" ry="0.7" fill="#6a665c" opacity="0.82"/><ellipse cx="36.4" cy="35.3" rx="3.5" ry="1.1" fill="#f4f4f2" opacity="0.58"/><ellipse cx="56.6" cy="44.8" rx="4.5" ry="0.6" fill="#e8e8e6" opacity="0.75"/><ellipse cx="59.5" cy="18.8" rx="2.3" ry="1.1" fill="#7e7a70" opacity="0.60"/><ellipse cx="84.6" cy="44.9" rx="3.5" ry="0.7" fill="#6a665c" opacity="0.88"/><ellipse cx="33.2" cy="37.3" rx="5.7" ry="0.7" fill="#6a665c" opacity="0.79"/><ellipse cx="73.5" cy="40.3" rx="2.1" ry="0.6" fill="#e8e8e6" opacity="0.69"/><ellipse cx="99.8" cy="47.7" rx="5.2" ry="1.0" fill="#7e7a70" opacity="0.83"/><ellipse cx="39.7" cy="24.8" rx="5.2" ry="0.9" fill="#e8e8e6" opacity="0.83"/><ellipse cx="86.4" cy="30.4" rx="5.4" ry="0.8" fill="#6a665c" opacity="0.81"/><ellipse cx="73.5" cy="25.6" rx="5.0" ry="0.6" fill="#7e7a70" opacity="0.53"/><ellipse cx="32.5" cy="27.6" rx="2.6" ry="0.8" fill="#6a665c" opacity="0.54"/><ellipse cx="35.3" cy="31.2" rx="2.4" ry="0.8" fill="#f4f4f2" opacity="0.78"/><ellipse cx="62.6" cy="11.7" rx="3.8" ry="1.0" fill="#7e7a70" opacity="0.59"/><ellipse cx="69.3" cy="38.7" rx="5.1" ry="0.7" fill="#e8e8e6" opacity="0.61"/><ellipse cx="49.5" cy="12.7" rx="2.8" ry="0.6" fill="#6a665c" opacity="0.60"/><ellipse cx="41.2" cy="44.2" rx="2.8" ry="0.5" fill="#55524a" opacity="0.60"/><ellipse cx="48.0" cy="26.3" rx="4.6" ry="1.1" fill="#e8e8e6" opacity="0.54"/><ellipse cx="64.7" cy="41.0" rx="5.7" ry="0.5" fill="#7e7a70" opacity="0.62"/><ellipse cx="38.7" cy="9.5" rx="2.8" ry="0.5" fill="#55524a" opacity="0.71"/><ellipse cx="43.0" cy="30.2" rx="2.4" ry="0.9" fill="#e8e8e6" opacity="0.75"/><ellipse cx="22.4" cy="100.5" rx="2.2" ry="1.1" fill="#f6f6f4" opacity="0.52"/><ellipse cx="75.4" cy="113.0" rx="6.1" ry="0.7" fill="#ecece8" opacity="0.65"/><ellipse cx="64.0" cy="93.8" rx="6.0" ry="0.8" fill="#ecece8" opacity="0.53"/><ellipse cx="10.4" cy="101.1" rx="5.2" ry="0.6" fill="#f6f6f4" opacity="0.57"/><ellipse cx="71.6" cy="101.4" rx="5.3" ry="0.8" fill="#7a766c" opacity="0.52"/><ellipse cx="76.8" cy="112.3" rx="4.1" ry="1.0" fill="#8a867c" opacity="0.90"/><ellipse cx="37.5" cy="96.5" rx="3.0" ry="0.5" fill="#8a867c" opacity="0.86"/><ellipse cx="43.6" cy="110.9" rx="4.9" ry="0.7" fill="#8a867c" opacity="0.81"/><ellipse cx="13.4" cy="93.2" rx="5.2" ry="1.0" fill="#f6f6f4" opacity="0.54"/><ellipse cx="64.1" cy="100.5" rx="2.7" ry="0.7" fill="#f6f6f4" opacity="0.71"/><ellipse cx="95.3" cy="94.5" rx="5.8" ry="1.0" fill="#8a867c" opacity="0.82"/><ellipse cx="31.1" cy="111.3" rx="6.9" ry="0.8" fill="#ecece8" opacity="0.52"/><ellipse cx="95.4" cy="100.9" rx="5.2" ry="1.0" fill="#f6f6f4" opacity="0.75"/><ellipse cx="63.3" cy="96.5" rx="2.9" ry="0.6" fill="#8a867c" opacity="0.66"/><ellipse cx="53.3" cy="100.8" rx="2.7" ry="1.1" fill="#ecece8" opacity="0.83"/><ellipse cx="19.8" cy="112.3" rx="5.3" ry="0.7" fill="#ecece8" opacity="0.66"/><ellipse cx="46.9" cy="111.5" rx="5.2" ry="0.7" fill="#7a766c" opacity="0.60"/><ellipse cx="40.1" cy="100.5" rx="2.9" ry="0.5" fill="#8a867c" opacity="0.89"/><ellipse cx="47.9" cy="102.3" rx="6.2" ry="1.0" fill="#8a867c" opacity="0.66"/><ellipse cx="6.9" cy="100.2" rx="2.5" ry="0.8" fill="#7a766c" opacity="0.70"/><ellipse cx="4.2" cy="106.6" rx="6.6" ry="0.7" fill="#ecece8" opacity="0.79"/><ellipse cx="8.2" cy="109.3" rx="5.3" ry="1.0" fill="#8a867c" opacity="0.51"/><ellipse cx="6.8" cy="106.1" rx="3.0" ry="1.1" fill="#ecece8" opacity="0.70"/><ellipse cx="98.5" cy="113.1" rx="5.4" ry="0.9" fill="#f6f6f4" opacity="0.59"/><ellipse cx="85.8" cy="106.0" rx="2.8" ry="1.0" fill="#7a766c" opacity="0.61"/><ellipse cx="84.0" cy="95.3" rx="3.0" ry="0.7" fill="#8a867c" opacity="0.70"/><ellipse cx="32.9" cy="92.8" rx="4.0" ry="0.9" fill="#f6f6f4" opacity="0.61"/><ellipse cx="33.8" cy="100.7" rx="2.6" ry="0.8" fill="#7a766c" opacity="0.75"/><ellipse cx="37.1" cy="112.1" rx="3.3" ry="0.8" fill="#ecece8" opacity="0.84"/><ellipse cx="76.0" cy="100.5" rx="7.0" ry="0.8" fill="#8a867c" opacity="0.64"/><ellipse cx="78.8" cy="102.2" rx="5.1" ry="1.1" fill="#f6f6f4" opacity="0.62"/><ellipse cx="53.2" cy="99.1" rx="5.7" ry="0.9" fill="#7a766c" opacity="0.59"/><ellipse cx="30.0" cy="106.4" rx="4.6" ry="1.0" fill="#8a867c" opacity="0.55"/><ellipse cx="23.4" cy="107.0" rx="2.3" ry="0.8" fill="#ecece8" opacity="0.62"/><ellipse cx="53.9" cy="104.3" rx="4.9" ry="0.9" fill="#8a867c" opacity="0.58"/><ellipse cx="64.3" cy="102.9" rx="2.1" ry="1.0" fill="#f6f6f4" opacity="0.78"/><ellipse cx="46.4" cy="93.5" rx="6.4" ry="1.0" fill="#f6f6f4" opacity="0.66"/><ellipse cx="27.2" cy="92.3" rx="5.0" ry="0.8" fill="#7a766c" opacity="0.74"/><ellipse cx="53.3" cy="103.3" rx="6.5" ry="0.5" fill="#f6f6f4" opacity="0.71"/><ellipse cx="41.8" cy="97.5" rx="6.6" ry="0.6" fill="#ecece8" opacity="0.75"/><ellipse cx="67.7" cy="96.5" rx="3.0" ry="0.9" fill="#8a867c" opacity="0.70"/><ellipse cx="66.1" cy="110.7" rx="4.5" ry="0.5" fill="#f6f6f4" opacity="0.75"/><ellipse cx="102.4" cy="108.7" rx="5.6" ry="0.5" fill="#8a867c" opacity="0.84"/><ellipse cx="76.8" cy="102.7" rx="2.9" ry="1.1" fill="#8a867c" opacity="0.60"/><ellipse cx="66.3" cy="94.8" rx="5.6" ry="0.7" fill="#7a766c" opacity="0.72"/><ellipse cx="44.9" cy="110.1" rx="3.5" ry="1.1" fill="#7a766c" opacity="0.86"/><ellipse cx="8.8" cy="103.7" rx="3.3" ry="0.6" fill="#f6f6f4" opacity="0.80"/><ellipse cx="97.3" cy="109.2" rx="3.0" ry="0.7" fill="#7a766c" opacity="0.74"/><ellipse cx="39.1" cy="111.6" rx="4.4" ry="0.8" fill="#8a867c" opacity="0.50"/><ellipse cx="2.7" cy="114.0" rx="4.9" ry="0.7" fill="#f6f6f4" opacity="0.58"/><ellipse cx="64.1" cy="93.8" rx="2.7" ry="0.5" fill="#f6f6f4" opacity="0.54"/><ellipse cx="95.7" cy="99.9" rx="5.5" ry="0.5" fill="#f6f6f4" opacity="0.56"/><ellipse cx="66.3" cy="93.0" rx="5.7" ry="0.5" fill="#ecece8" opacity="0.74"/><ellipse cx="37.4" cy="110.8" rx="6.4" ry="1.0" fill="#ecece8" opacity="0.78"/><ellipse cx="39.5" cy="97.7" rx="2.6" ry="0.5" fill="#f6f6f4" opacity="0.84"/><ellipse cx="83.6" cy="106.6" rx="4.4" ry="0.6" fill="#7a766c" opacity="0.82"/><ellipse cx="66.6" cy="98.8" rx="4.1" ry="0.5" fill="#7a766c" opacity="0.60"/><ellipse cx="29.1" cy="108.5" rx="6.6" ry="1.0" fill="#7a766c" opacity="0.74"/><ellipse cx="49.0" cy="98.6" rx="5.9" ry="0.5" fill="#ecece8" opacity="0.71"/><ellipse cx="10.1" cy="102.8" rx="4.7" ry="0.6" fill="#ecece8" opacity="0.84"/><ellipse cx="9.4" cy="110.9" rx="4.2" ry="0.8" fill="#f6f6f4" opacity="0.62"/><ellipse cx="77.3" cy="93.2" rx="4.5" ry="0.8" fill="#7a766c" opacity="0.82"/><ellipse cx="19.0" cy="103.4" rx="6.8" ry="0.8" fill="#7a766c" opacity="0.73"/><ellipse cx="16.4" cy="110.8" rx="4.5" ry="0.6" fill="#f6f6f4" opacity="0.75"/><ellipse cx="8.3" cy="110.1" rx="5.1" ry="0.7" fill="#ecece8" opacity="0.66"/><ellipse cx="40.6" cy="112.5" rx="4.1" ry="0.9" fill="#ecece8" opacity="0.65"/><ellipse cx="31.2" cy="101.8" rx="3.9" ry="1.0" fill="#f6f6f4" opacity="0.59"/><ellipse cx="47.5" cy="104.2" rx="3.7" ry="0.7" fill="#ecece8" opacity="0.56"/><ellipse cx="86.8" cy="107.2" rx="2.8" ry="0.8" fill="#7a766c" opacity="0.81"/><ellipse cx="59.7" cy="94.9" rx="5.2" ry="0.9" fill="#8a867c" opacity="0.70"/><ellipse cx="27.6" cy="109.4" rx="5.6" ry="1.1" fill="#f6f6f4" opacity="0.79"/><ellipse cx="62.1" cy="100.0" rx="3.6" ry="0.6" fill="#f6f6f4" opacity="0.89"/><ellipse cx="75.1" cy="94.3" rx="3.0" ry="0.6" fill="#ecece8" opacity="0.56"/><ellipse cx="31.1" cy="98.8" rx="3.0" ry="0.9" fill="#7a766c" opacity="0.54"/><ellipse cx="21.3" cy="100.9" rx="2.1" ry="1.0" fill="#ecece8" opacity="0.67"/><ellipse cx="22.9" cy="114.6" rx="4.3" ry="0.6" fill="#7a766c" opacity="0.74"/><ellipse cx="41.7" cy="109.0" rx="5.5" ry="0.9" fill="#8a867c" opacity="0.76"/><ellipse cx="87.1" cy="107.4" rx="5.4" ry="0.9" fill="#f6f6f4" opacity="0.68"/><ellipse cx="32.2" cy="106.5" rx="6.5" ry="0.6" fill="#ecece8" opacity="0.66"/><ellipse cx="73.4" cy="95.6" rx="4.4" ry="0.5" fill="#8a867c" opacity="0.84"/><ellipse cx="53.4" cy="107.2" rx="6.5" ry="0.7" fill="#f6f6f4" opacity="0.50"/><ellipse cx="85.7" cy="112.9" rx="2.2" ry="0.8" fill="#ecece8" opacity="0.56"/><ellipse cx="80.5" cy="113.6" rx="2.5" ry="0.8" fill="#7a766c" opacity="0.72"/><ellipse cx="73.9" cy="103.8" rx="4.6" ry="0.7" fill="#7a766c" opacity="0.88"/><ellipse cx="21.6" cy="107.7" rx="4.6" ry="1.1" fill="#8a867c" opacity="0.79"/><ellipse cx="63.2" cy="106.7" rx="3.4" ry="0.7" fill="#7a766c" opacity="0.51"/><ellipse cx="43.1" cy="101.7" rx="4.9" ry="0.6" fill="#7a766c" opacity="0.62"/><ellipse cx="41.2" cy="113.9" rx="7.0" ry="1.1" fill="#f6f6f4" opacity="0.68"/><ellipse cx="16.9" cy="113.4" rx="6.0" ry="0.9" fill="#ecece8" opacity="0.69"/><ellipse cx="57.9" cy="97.2" rx="3.8" ry="0.9" fill="#f6f6f4" opacity="0.83"/><ellipse cx="99.7" cy="65.7" rx="4.3" ry="1.1" fill="#dcdcd8" opacity="0.79"/><ellipse cx="93.4" cy="83.1" rx="2.8" ry="0.9" fill="#ececea" opacity="0.53"/><ellipse cx="92.7" cy="50.2" rx="4.4" ry="1.2" fill="#ececea" opacity="0.58"/><ellipse cx="96.8" cy="57.6" rx="3.3" ry="1.0" fill="#dcdcd8" opacity="0.73"/><ellipse cx="91.5" cy="91.1" rx="2.2" ry="1.2" fill="#dcdcd8" opacity="0.85"/><ellipse cx="99.1" cy="47.7" rx="3.9" ry="0.6" fill="#dcdcd8" opacity="0.41"/><ellipse cx="102.1" cy="76.1" rx="3.8" ry="1.0" fill="#dcdcd8" opacity="0.83"/><ellipse cx="88.3" cy="64.9" rx="2.6" ry="0.9" fill="#ececea" opacity="0.67"/><ellipse cx="96.0" cy="77.8" rx="4.0" ry="1.2" fill="#ececea" opacity="0.79"/><ellipse cx="100.1" cy="50.9" rx="3.6" ry="1.1" fill="#ececea" opacity="0.62"/><ellipse cx="100.9" cy="70.5" rx="3.3" ry="1.2" fill="#dcdcd8" opacity="0.64"/><ellipse cx="95.0" cy="66.6" rx="4.1" ry="0.8" fill="#ececea" opacity="0.48"/><ellipse cx="95.8" cy="80.4" rx="4.5" ry="0.9" fill="#ececea" opacity="0.68"/><ellipse cx="97.0" cy="86.2" rx="3.3" ry="1.3" fill="#dcdcd8" opacity="0.74"/><ellipse cx="88.2" cy="59.8" rx="2.1" ry="0.6" fill="#ececea" opacity="0.77"/><ellipse cx="103.0" cy="84.5" rx="3.5" ry="0.9" fill="#ececea" opacity="0.85"/><ellipse cx="85.6" cy="79.5" rx="3.0" ry="1.2" fill="#ececea" opacity="0.58"/><ellipse cx="93.5" cy="68.9" rx="2.9" ry="0.8" fill="#ececea" opacity="0.53"/><ellipse cx="85.9" cy="55.9" rx="4.5" ry="0.9" fill="#dcdcd8" opacity="0.65"/><ellipse cx="89.9" cy="67.9" rx="4.0" ry="1.2" fill="#ececea" opacity="0.57"/><ellipse cx="90.7" cy="56.5" rx="4.4" ry="0.6" fill="#ececea" opacity="0.76"/><ellipse cx="100.9" cy="70.0" rx="3.2" ry="0.7" fill="#ececea" opacity="0.42"/><ellipse cx="99.8" cy="66.1" rx="4.4" ry="1.2" fill="#ececea" opacity="0.71"/><ellipse cx="96.1" cy="74.5" rx="2.6" ry="1.1" fill="#ececea" opacity="0.63"/><ellipse cx="98.7" cy="45.6" rx="4.6" ry="0.9" fill="#ececea" opacity="0.45"/><ellipse cx="101.7" cy="40.7" rx="4.4" ry="1.0" fill="#ececea" opacity="0.53"/><ellipse cx="90.4" cy="63.2" rx="2.1" ry="1.0" fill="#dcdcd8" opacity="0.69"/><ellipse cx="101.4" cy="67.4" rx="4.5" ry="1.1" fill="#ececea" opacity="0.61"/><ellipse cx="97.5" cy="62.3" rx="2.0" ry="0.9" fill="#ececea" opacity="0.70"/><ellipse cx="101.9" cy="93.9" rx="4.3" ry="1.0" fill="#dcdcd8" opacity="0.44"/></g><g filter="url(#b2)"><ellipse cx="14" cy="22" rx="22" ry="30" fill="#4a5a36"/><ellipse cx="32" cy="14" rx="14" ry="16" fill="#55663c"/><ellipse cx="8" cy="52" rx="10" ry="16" fill="#4e6038"/><ellipse cx="24" cy="44" rx="7" ry="10" fill="#5e7044"/><ellipse cx="3" cy="92" rx="4" ry="22" fill="#5a6c40"/></g><g filter="url(#b05)"><path d="M8 10L14 6L18 30L12 44L8 40ZM26 18L32 14L30 34L24 42Z" fill="#6f844c" opacity="0.8"/><path d="M36 6L42 10L34 32L30 28Z" fill="#3a4a2c" opacity="0.7"/><path d="M2 32L7 36L6 56L2 54Z" fill="#7c905a" opacity="0.8"/></g><g filter="url(#b1)"><path d="M2 76C10 72 30 72 50 73C70 74 86 75 92 80C90 90 70 94 40 94C20 94 4 90 2 84Z" fill="#5e4e44" opacity="0.85"/><path d="M11 71C12 58 26 50 50 48C58 42 68 37 77 39C86 41 92 48 93 56C93 61 89 63 84 63C78 68 72 72 62 73L11 74Z" fill="#583a2c"/><ellipse cx="64" cy="41" rx="3.5" ry="3" fill="#4a2e22"/><ellipse cx="73" cy="45" rx="3" ry="1" fill="#2a1a14"/><ellipse cx="90" cy="54" rx="2.5" ry="3" fill="#2a1c16"/></g><g filter="url(#b05)"><ellipse cx="45.1" cy="90.5" rx="5.1" ry="0.5" fill="#8a8278" opacity="0.60"/><ellipse cx="88.9" cy="90.0" rx="7.3" ry="0.6" fill="#8a8278" opacity="0.41"/><ellipse cx="66.1" cy="81.4" rx="7.6" ry="0.7" fill="#8a8278" opacity="0.62"/><ellipse cx="64.1" cy="80.0" rx="4.5" ry="0.8" fill="#8a8278" opacity="0.55"/><ellipse cx="61.9" cy="90.5" rx="6.6" ry="0.5" fill="#8a8278" opacity="0.40"/><ellipse cx="60.3" cy="89.4" rx="4.9" ry="0.7" fill="#8a8278" opacity="0.58"/><ellipse cx="86.4" cy="89.7" rx="4.6" ry="1.0" fill="#8a8278" opacity="0.62"/><ellipse cx="44.9" cy="80.3" rx="4.8" ry="0.8" fill="#8a8278" opacity="0.59"/><ellipse cx="40.5" cy="83.4" rx="7.7" ry="0.9" fill="#a29a90" opacity="0.57"/><ellipse cx="29.9" cy="78.8" rx="7.3" ry="0.9" fill="#a29a90" opacity="0.40"/><ellipse cx="17.8" cy="89.7" rx="7.9" ry="0.6" fill="#a29a90" opacity="0.52"/><ellipse cx="37.0" cy="88.8" rx="7.0" ry="0.6" fill="#8a8278" opacity="0.40"/><ellipse cx="27.4" cy="83.9" rx="4.4" ry="0.6" fill="#8a8278" opacity="0.67"/><ellipse cx="89.4" cy="80.1" rx="4.7" ry="0.5" fill="#a29a90" opacity="0.57"/><ellipse cx="72.8" cy="80.8" rx="4.5" ry="0.5" fill="#8a8278" opacity="0.52"/><ellipse cx="65.2" cy="91.0" rx="7.0" ry="0.7" fill="#8a8278" opacity="0.43"/><ellipse cx="73.6" cy="88.8" rx="5.0" ry="0.8" fill="#8a8278" opacity="0.48"/><ellipse cx="75.8" cy="82.5" rx="3.9" ry="0.6" fill="#8a8278" opacity="0.45"/><ellipse cx="64.6" cy="83.1" rx="5.0" ry="0.8" fill="#a29a90" opacity="0.44"/><ellipse cx="8.8" cy="92.0" rx="7.3" ry="0.7" fill="#a29a90" opacity="0.54"/><ellipse cx="11.9" cy="82.4" rx="4.7" ry="0.8" fill="#8a8278" opacity="0.41"/><ellipse cx="7.9" cy="91.9" rx="5.9" ry="0.6" fill="#a29a90" opacity="0.68"/><ellipse cx="28.8" cy="79.4" rx="6.8" ry="0.9" fill="#a29a90" opacity="0.69"/><ellipse cx="26.6" cy="78.5" rx="8.0" ry="0.7" fill="#8a8278" opacity="0.41"/><ellipse cx="8.0" cy="83.2" rx="5.4" ry="0.9" fill="#a29a90" opacity="0.67"/></g></g><g clip-path="url(#c2)"><rect x="103" y="0" width="102" height="115" fill="url(#gnd)"/><g filter="url(#b05)"><ellipse cx="191.0" cy="88.0" rx="2.0" ry="0.5" fill="#8a5e3c" opacity="0.43"/><ellipse cx="126.8" cy="46.7" rx="1.5" ry="0.7" fill="#7a5236" opacity="0.36"/><ellipse cx="201.5" cy="114.4" rx="1.1" ry="1.0" fill="#4a3020" opacity="0.68"/><ellipse cx="109.0" cy="81.5" rx="2.2" ry="0.4" fill="#8a5e3c" opacity="0.61"/><ellipse cx="175.4" cy="88.5" rx="0.9" ry="0.5" fill="#3a2616" opacity="0.60"/><ellipse cx="198.8" cy="90.8" rx="1.8" ry="0.7" fill="#a07050" opacity="0.56"/><ellipse cx="151.0" cy="67.9" rx="1.0" ry="0.7" fill="#3a2616" opacity="0.37"/><ellipse cx="127.3" cy="50.7" rx="1.6" ry="0.9" fill="#8a5e3c" opacity="0.62"/><ellipse cx="119.0" cy="102.5" rx="2.4" ry="0.9" fill="#8a5e3c" opacity="0.66"/><ellipse cx="117.3" cy="73.5" rx="2.4" ry="0.6" fill="#8a5e3c" opacity="0.31"/><ellipse cx="110.7" cy="112.9" rx="2.2" ry="0.7" fill="#a07050" opacity="0.55"/><ellipse cx="117.6" cy="56.6" rx="1.1" ry="0.7" fill="#8a5e3c" opacity="0.66"/><ellipse cx="147.8" cy="51.2" rx="1.5" ry="0.5" fill="#3a2616" opacity="0.41"/><ellipse cx="188.6" cy="65.1" rx="1.2" ry="0.5" fill="#4a3020" opacity="0.48"/><ellipse cx="152.2" cy="51.5" rx="0.9" ry="0.9" fill="#7a5236" opacity="0.57"/><ellipse cx="124.5" cy="75.8" rx="1.0" ry="0.9" fill="#a07050" opacity="0.69"/><ellipse cx="147.1" cy="59.6" rx="2.4" ry="0.5" fill="#4a3020" opacity="0.42"/><ellipse cx="194.4" cy="44.3" rx="1.0" ry="0.8" fill="#a07050" opacity="0.48"/><ellipse cx="154.8" cy="78.3" rx="0.8" ry="0.9" fill="#3a2616" opacity="0.51"/><ellipse cx="122.0" cy="72.6" rx="1.2" ry="0.7" fill="#3a2616" opacity="0.36"/><ellipse cx="121.4" cy="97.8" rx="1.1" ry="0.4" fill="#4a3020" opacity="0.33"/><ellipse cx="165.1" cy="77.2" rx="1.1" ry="0.5" fill="#a07050" opacity="0.57"/><ellipse cx="167.1" cy="54.4" rx="1.1" ry="0.4" fill="#a07050" opacity="0.59"/><ellipse cx="144.6" cy="94.1" rx="1.7" ry="0.6" fill="#8a5e3c" opacity="0.41"/><ellipse cx="168.2" cy="110.9" rx="0.8" ry="0.9" fill="#8a5e3c" opacity="0.49"/><ellipse cx="191.9" cy="60.0" rx="1.8" ry="1.0" fill="#4a3020" opacity="0.31"/><ellipse cx="174.6" cy="83.1" rx="1.4" ry="1.0" fill="#8a5e3c" opacity="0.69"/><ellipse cx="110.3" cy="66.8" rx="2.2" ry="0.9" fill="#4a3020" opacity="0.43"/><ellipse cx="175.5" cy="68.6" rx="1.3" ry="0.5" fill="#8a5e3c" opacity="0.59"/><ellipse cx="148.5" cy="41.9" rx="1.0" ry="0.5" fill="#7a5236" opacity="0.34"/><ellipse cx="166.1" cy="52.6" rx="1.2" ry="0.9" fill="#a07050" opacity="0.31"/><ellipse cx="112.8" cy="92.4" rx="1.2" ry="0.9" fill="#4a3020" opacity="0.55"/><ellipse cx="150.3" cy="57.9" rx="1.0" ry="0.9" fill="#3a2616" opacity="0.59"/><ellipse cx="107.6" cy="49.2" rx="1.8" ry="0.9" fill="#3a2616" opacity="0.34"/><ellipse cx="115.4" cy="106.3" rx="1.8" ry="0.9" fill="#7a5236" opacity="0.36"/><ellipse cx="161.4" cy="96.0" rx="2.4" ry="0.4" fill="#4a3020" opacity="0.55"/><ellipse cx="173.8" cy="84.8" rx="1.7" ry="0.6" fill="#7a5236" opacity="0.68"/><ellipse cx="182.2" cy="65.4" rx="2.2" ry="0.8" fill="#4a3020" opacity="0.64"/><ellipse cx="160.6" cy="113.9" rx="2.2" ry="0.9" fill="#a07050" opacity="0.32"/><ellipse cx="155.8" cy="111.8" rx="1.2" ry="0.7" fill="#a07050" opacity="0.55"/><ellipse cx="140.2" cy="79.8" rx="1.4" ry="0.5" fill="#8a5e3c" opacity="0.57"/><ellipse cx="126.0" cy="71.6" rx="2.1" ry="1.0" fill="#3a2616" opacity="0.55"/><ellipse cx="185.5" cy="106.3" rx="0.9" ry="0.8" fill="#8a5e3c" opacity="0.41"/><ellipse cx="172.2" cy="60.5" rx="2.2" ry="0.4" fill="#7a5236" opacity="0.34"/><ellipse cx="115.4" cy="41.0" rx="2.4" ry="0.6" fill="#4a3020" opacity="0.42"/><ellipse cx="169.0" cy="49.0" rx="2.4" ry="1.0" fill="#7a5236" opacity="0.66"/><ellipse cx="111.6" cy="84.3" rx="1.5" ry="0.7" fill="#4a3020" opacity="0.65"/><ellipse cx="196.4" cy="83.3" rx="1.2" ry="0.5" fill="#a07050" opacity="0.52"/><ellipse cx="188.7" cy="85.7" rx="1.2" ry="0.6" fill="#7a5236" opacity="0.52"/><ellipse cx="140.4" cy="106.9" rx="1.8" ry="0.7" fill="#a07050" opacity="0.42"/><ellipse cx="127.7" cy="56.6" rx="1.7" ry="1.0" fill="#7a5236" opacity="0.46"/><ellipse cx="197.3" cy="52.2" rx="1.4" ry="0.6" fill="#4a3020" opacity="0.41"/><ellipse cx="192.6" cy="56.2" rx="2.1" ry="0.5" fill="#8a5e3c" opacity="0.33"/><ellipse cx="191.9" cy="73.0" rx="1.7" ry="0.9" fill="#8a5e3c" opacity="0.44"/><ellipse cx="180.8" cy="79.1" rx="1.5" ry="0.8" fill="#4a3020" opacity="0.36"/><ellipse cx="123.7" cy="85.8" rx="2.2" ry="0.7" fill="#a07050" opacity="0.60"/><ellipse cx="178.8" cy="97.0" rx="1.3" ry="0.8" fill="#3a2616" opacity="0.55"/><ellipse cx="174.8" cy="71.0" rx="0.8" ry="0.9" fill="#8a5e3c" opacity="0.53"/><ellipse cx="153.8" cy="112.2" rx="1.1" ry="0.9" fill="#7a5236" opacity="0.41"/><ellipse cx="166.4" cy="48.3" rx="2.0" ry="0.6" fill="#3a2616" opacity="0.44"/><ellipse cx="139.0" cy="79.5" rx="1.5" ry="0.6" fill="#7a5236" opacity="0.61"/><ellipse cx="189.7" cy="77.5" rx="1.3" ry="0.7" fill="#3a2616" opacity="0.62"/><ellipse cx="147.4" cy="68.3" rx="0.9" ry="1.0" fill="#4a3020" opacity="0.43"/><ellipse cx="189.0" cy="102.9" rx="1.1" ry="0.7" fill="#a07050" opacity="0.66"/><ellipse cx="104.1" cy="43.6" rx="2.3" ry="0.6" fill="#7a5236" opacity="0.51"/><ellipse cx="134.9" cy="86.5" rx="1.7" ry="0.7" fill="#3a2616" opacity="0.57"/><ellipse cx="142.7" cy="66.8" rx="1.9" ry="0.7" fill="#7a5236" opacity="0.30"/><ellipse cx="110.0" cy="57.2" rx="1.4" ry="0.6" fill="#3a2616" opacity="0.52"/><ellipse cx="161.6" cy="106.0" rx="1.6" ry="0.7" fill="#3a2616" opacity="0.55"/><ellipse cx="204.6" cy="65.7" rx="2.1" ry="0.5" fill="#7a5236" opacity="0.45"/><ellipse cx="140.4" cy="45.6" rx="1.7" ry="0.5" fill="#a07050" opacity="0.66"/><ellipse cx="173.4" cy="101.5" rx="2.3" ry="0.7" fill="#7a5236" opacity="0.36"/><ellipse cx="132.6" cy="78.4" rx="2.3" ry="0.6" fill="#7a5236" opacity="0.32"/><ellipse cx="160.6" cy="48.0" rx="2.5" ry="0.8" fill="#7a5236" opacity="0.32"/><ellipse cx="145.0" cy="99.1" rx="2.0" ry="0.7" fill="#a07050" opacity="0.67"/><ellipse cx="143.6" cy="47.4" rx="1.9" ry="0.5" fill="#8a5e3c" opacity="0.50"/><ellipse cx="159.4" cy="60.0" rx="1.7" ry="0.5" fill="#7a5236" opacity="0.38"/><ellipse cx="164.4" cy="50.9" rx="2.1" ry="0.5" fill="#7a5236" opacity="0.34"/><ellipse cx="120.4" cy="79.2" rx="1.8" ry="0.9" fill="#3a2616" opacity="0.32"/><ellipse cx="104.3" cy="97.8" rx="1.0" ry="0.5" fill="#a07050" opacity="0.41"/><ellipse cx="106.4" cy="87.2" rx="0.9" ry="0.5" fill="#7a5236" opacity="0.55"/><ellipse cx="105.0" cy="56.5" rx="1.8" ry="1.0" fill="#3a2616" opacity="0.48"/><ellipse cx="166.3" cy="58.7" rx="1.1" ry="0.8" fill="#8a5e3c" opacity="0.37"/><ellipse cx="103.6" cy="105.0" rx="1.3" ry="0.8" fill="#3a2616" opacity="0.68"/><ellipse cx="153.5" cy="111.2" rx="2.0" ry="0.8" fill="#4a3020" opacity="0.53"/><ellipse cx="145.2" cy="69.9" rx="0.8" ry="0.9" fill="#3a2616" opacity="0.33"/><ellipse cx="120.3" cy="68.4" rx="2.5" ry="0.6" fill="#8a5e3c" opacity="0.52"/><ellipse cx="114.7" cy="80.0" rx="1.4" ry="0.8" fill="#3a2616" opacity="0.68"/><ellipse cx="146.1" cy="108.5" rx="1.2" ry="0.5" fill="#7a5236" opacity="0.41"/><ellipse cx="127.2" cy="42.6" rx="1.4" ry="0.5" fill="#8a5e3c" opacity="0.58"/><ellipse cx="112.4" cy="60.2" rx="1.7" ry="0.7" fill="#4a3020" opacity="0.62"/><ellipse cx="127.5" cy="67.6" rx="2.0" ry="0.6" fill="#4a3020" opacity="0.68"/><ellipse cx="124.2" cy="111.3" rx="1.1" ry="0.9" fill="#7a5236" opacity="0.57"/><ellipse cx="199.1" cy="114.8" rx="2.3" ry="0.8" fill="#7a5236" opacity="0.45"/><ellipse cx="128.1" cy="85.6" rx="1.0" ry="0.9" fill="#4a3020" opacity="0.57"/><ellipse cx="112.3" cy="103.9" rx="0.8" ry="0.8" fill="#3a2616" opacity="0.36"/><ellipse cx="104.5" cy="93.3" rx="2.1" ry="0.5" fill="#4a3020" opacity="0.38"/><ellipse cx="193.9" cy="45.1" rx="2.2" ry="0.9" fill="#a07050" opacity="0.38"/><ellipse cx="176.3" cy="46.6" rx="1.0" ry="0.8" fill="#a07050" opacity="0.41"/><ellipse cx="144.1" cy="108.2" rx="2.4" ry="0.5" fill="#4a3020" opacity="0.45"/><ellipse cx="184.5" cy="91.8" rx="0.8" ry="0.8" fill="#3a2616" opacity="0.49"/><ellipse cx="205.0" cy="70.0" rx="1.1" ry="0.5" fill="#8a5e3c" opacity="0.67"/><ellipse cx="177.9" cy="93.4" rx="1.5" ry="0.8" fill="#8a5e3c" opacity="0.47"/><ellipse cx="180.2" cy="51.7" rx="1.7" ry="0.8" fill="#8a5e3c" opacity="0.68"/><ellipse cx="160.6" cy="57.1" rx="2.0" ry="0.6" fill="#3a2616" opacity="0.47"/><ellipse cx="172.8" cy="66.2" rx="1.0" ry="0.9" fill="#8a5e3c" opacity="0.56"/><ellipse cx="194.9" cy="105.6" rx="1.8" ry="0.4" fill="#7a5236" opacity="0.40"/><ellipse cx="114.3" cy="99.4" rx="2.1" ry="0.6" fill="#4a3020" opacity="0.67"/><ellipse cx="145.6" cy="95.8" rx="2.2" ry="0.6" fill="#7a5236" opacity="0.34"/><ellipse cx="199.5" cy="71.8" rx="2.0" ry="0.8" fill="#a07050" opacity="0.63"/><ellipse cx="167.1" cy="74.0" rx="2.0" ry="0.5" fill="#8a5e3c" opacity="0.57"/><ellipse cx="189.3" cy="98.4" rx="2.1" ry="0.4" fill="#3a2616" opacity="0.58"/><ellipse cx="185.2" cy="59.6" rx="1.1" ry="0.9" fill="#7a5236" opacity="0.39"/><ellipse cx="129.5" cy="112.3" rx="1.4" ry="0.6" fill="#4a3020" opacity="0.38"/><ellipse cx="134.7" cy="50.2" rx="1.9" ry="0.5" fill="#3a2616" opacity="0.40"/><ellipse cx="155.6" cy="73.4" rx="2.0" ry="0.5" fill="#a07050" opacity="0.58"/><ellipse cx="162.9" cy="58.1" rx="1.7" ry="0.9" fill="#8a5e3c" opacity="0.37"/><ellipse cx="171.0" cy="84.9" rx="2.2" ry="0.6" fill="#3a2616" opacity="0.38"/><ellipse cx="173.4" cy="40.9" rx="1.2" ry="0.4" fill="#3a2616" opacity="0.41"/><ellipse cx="123.1" cy="92.6" rx="2.4" ry="0.5" fill="#3a2616" opacity="0.48"/><ellipse cx="161.1" cy="61.7" rx="0.9" ry="0.4" fill="#7a5236" opacity="0.70"/><ellipse cx="179.5" cy="46.3" rx="2.5" ry="0.7" fill="#a07050" opacity="0.34"/><ellipse cx="152.9" cy="72.6" rx="2.1" ry="0.6" fill="#4a3020" opacity="0.44"/><ellipse cx="112.3" cy="61.4" rx="2.4" ry="0.8" fill="#7a5236" opacity="0.40"/><ellipse cx="128.1" cy="50.4" rx="0.8" ry="0.6" fill="#8a5e3c" opacity="0.36"/><ellipse cx="140.5" cy="112.2" rx="2.2" ry="1.0" fill="#7a5236" opacity="0.37"/><ellipse cx="183.0" cy="102.3" rx="1.4" ry="0.5" fill="#7a5236" opacity="0.63"/><ellipse cx="135.7" cy="67.6" rx="2.4" ry="0.9" fill="#7a5236" opacity="0.40"/><ellipse cx="108.9" cy="48.0" rx="2.3" ry="1.0" fill="#3a2616" opacity="0.50"/><ellipse cx="154.0" cy="51.8" rx="1.8" ry="0.8" fill="#a07050" opacity="0.36"/><ellipse cx="126.2" cy="50.4" rx="1.0" ry="0.4" fill="#3a2616" opacity="0.48"/><ellipse cx="122.5" cy="94.2" rx="0.9" ry="0.8" fill="#8a5e3c" opacity="0.63"/><ellipse cx="155.2" cy="50.7" rx="1.9" ry="0.7" fill="#8a5e3c" opacity="0.47"/><ellipse cx="137.5" cy="72.9" rx="2.3" ry="0.5" fill="#4a3020" opacity="0.42"/><ellipse cx="148.2" cy="82.3" rx="1.8" ry="0.7" fill="#a07050" opacity="0.52"/><ellipse cx="155.7" cy="72.1" rx="2.3" ry="0.9" fill="#7a5236" opacity="0.69"/><ellipse cx="201.1" cy="86.5" rx="2.0" ry="0.6" fill="#8a5e3c" opacity="0.56"/><ellipse cx="160.6" cy="71.6" rx="1.6" ry="0.8" fill="#a07050" opacity="0.42"/><ellipse cx="138.0" cy="106.4" rx="2.2" ry="0.5" fill="#8a5e3c" opacity="0.60"/><ellipse cx="173.5" cy="51.0" rx="1.4" ry="0.7" fill="#7a5236" opacity="0.47"/><ellipse cx="157.1" cy="82.4" rx="1.2" ry="0.5" fill="#3a2616" opacity="0.69"/><ellipse cx="123.7" cy="96.2" rx="2.3" ry="0.6" fill="#4a3020" opacity="0.34"/><ellipse cx="157.1" cy="58.9" rx="1.2" ry="0.7" fill="#3a2616" opacity="0.52"/><ellipse cx="174.1" cy="95.2" rx="1.8" ry="0.9" fill="#7a5236" opacity="0.57"/><ellipse cx="184.6" cy="50.1" rx="1.7" ry="0.8" fill="#7a5236" opacity="0.60"/><ellipse cx="114.7" cy="114.3" rx="1.0" ry="0.9" fill="#7a5236" opacity="0.46"/><ellipse cx="120.5" cy="112.0" rx="1.6" ry="0.5" fill="#7a5236" opacity="0.45"/><ellipse cx="166.1" cy="70.3" rx="1.4" ry="0.4" fill="#8a5e3c" opacity="0.54"/><ellipse cx="124.7" cy="62.5" rx="1.5" ry="0.9" fill="#4a3020" opacity="0.55"/><ellipse cx="192.0" cy="82.2" rx="1.1" ry="0.8" fill="#a07050" opacity="0.44"/><ellipse cx="180.9" cy="91.0" rx="1.0" ry="0.6" fill="#a07050" opacity="0.59"/><ellipse cx="199.7" cy="94.1" rx="2.2" ry="0.6" fill="#8a5e3c" opacity="0.44"/><ellipse cx="136.4" cy="85.2" rx="2.4" ry="0.8" fill="#8a5e3c" opacity="0.40"/><ellipse cx="122.7" cy="73.5" rx="1.5" ry="0.9" fill="#7a5236" opacity="0.50"/><ellipse cx="110.5" cy="59.4" rx="1.7" ry="0.6" fill="#4a3020" opacity="0.57"/><ellipse cx="141.8" cy="50.8" rx="1.7" ry="0.8" fill="#a07050" opacity="0.62"/><ellipse cx="199.8" cy="41.0" rx="2.5" ry="0.7" fill="#a07050" opacity="0.49"/><ellipse cx="106.2" cy="102.8" rx="1.1" ry="0.9" fill="#8a5e3c" opacity="0.57"/><ellipse cx="143.0" cy="75.7" rx="2.0" ry="0.7" fill="#4a3020" opacity="0.39"/><ellipse cx="200.7" cy="78.8" rx="1.4" ry="0.5" fill="#a07050" opacity="0.66"/><ellipse cx="163.1" cy="43.3" rx="2.2" ry="0.8" fill="#4a3020" opacity="0.43"/><ellipse cx="150.8" cy="110.3" rx="0.8" ry="0.7" fill="#a07050" opacity="0.43"/><ellipse cx="105.1" cy="74.5" rx="0.9" ry="0.5" fill="#7a5236" opacity="0.57"/><ellipse cx="130.8" cy="60.5" rx="2.5" ry="0.6" fill="#7a5236" opacity="0.53"/><ellipse cx="162.6" cy="50.4" rx="2.4" ry="0.9" fill="#8a5e3c" opacity="0.34"/><ellipse cx="123.3" cy="72.0" rx="1.9" ry="0.6" fill="#7a5236" opacity="0.41"/><ellipse cx="184.1" cy="105.5" rx="2.0" ry="0.6" fill="#4a3020" opacity="0.61"/><ellipse cx="178.4" cy="78.2" rx="1.4" ry="0.7" fill="#4a3020" opacity="0.46"/><ellipse cx="109.2" cy="65.3" rx="2.3" ry="0.9" fill="#a07050" opacity="0.50"/><ellipse cx="194.2" cy="100.7" rx="1.1" ry="0.5" fill="#a07050" opacity="0.66"/><ellipse cx="171.5" cy="70.4" rx="1.8" ry="0.6" fill="#3a2616" opacity="0.37"/><ellipse cx="109.8" cy="62.6" rx="1.2" ry="0.7" fill="#a07050" opacity="0.56"/><ellipse cx="201.5" cy="45.5" rx="1.8" ry="0.4" fill="#4a3020" opacity="0.37"/><ellipse cx="162.2" cy="114.1" rx="2.4" ry="0.8" fill="#a07050" opacity="0.59"/><ellipse cx="197.0" cy="102.9" rx="2.3" ry="0.6" fill="#a07050" opacity="0.40"/><ellipse cx="105.4" cy="52.3" rx="1.2" ry="0.4" fill="#a07050" opacity="0.32"/><ellipse cx="148.7" cy="107.0" rx="2.3" ry="0.8" fill="#a07050" opacity="0.38"/><ellipse cx="177.9" cy="112.2" rx="0.9" ry="0.4" fill="#7a5236" opacity="0.63"/><ellipse cx="161.7" cy="93.9" rx="1.1" ry="0.7" fill="#8a5e3c" opacity="0.65"/><ellipse cx="168.3" cy="109.2" rx="1.3" ry="0.9" fill="#4a3020" opacity="0.31"/><ellipse cx="152.6" cy="85.7" rx="1.1" ry="0.9" fill="#a07050" opacity="0.62"/><ellipse cx="111.9" cy="86.0" rx="2.5" ry="0.6" fill="#3a2616" opacity="0.68"/><ellipse cx="192.1" cy="41.9" rx="1.8" ry="1.0" fill="#a07050" opacity="0.32"/><ellipse cx="165.6" cy="94.3" rx="1.1" ry="0.4" fill="#a07050" opacity="0.38"/><ellipse cx="157.0" cy="103.0" rx="2.2" ry="0.7" fill="#a07050" opacity="0.52"/><ellipse cx="163.0" cy="81.6" rx="1.8" ry="0.5" fill="#7a5236" opacity="0.55"/><ellipse cx="186.0" cy="75.8" rx="2.1" ry="0.6" fill="#8a5e3c" opacity="0.61"/><ellipse cx="202.7" cy="74.0" rx="1.4" ry="0.7" fill="#a07050" opacity="0.41"/><ellipse cx="128.8" cy="81.9" rx="1.9" ry="0.9" fill="#8a5e3c" opacity="0.44"/><ellipse cx="203.9" cy="57.1" rx="2.4" ry="0.8" fill="#8a5e3c" opacity="0.35"/><ellipse cx="158.4" cy="55.4" rx="1.2" ry="0.8" fill="#4a3020" opacity="0.60"/><ellipse cx="195.1" cy="105.3" rx="1.7" ry="0.6" fill="#4a3020" opacity="0.58"/><ellipse cx="148.0" cy="104.5" rx="1.9" ry="0.6" fill="#4a3020" opacity="0.62"/><ellipse cx="149.9" cy="64.3" rx="1.0" ry="0.8" fill="#8a5e3c" opacity="0.33"/><ellipse cx="168.8" cy="70.1" rx="0.9" ry="0.7" fill="#a07050" opacity="0.46"/><ellipse cx="196.8" cy="110.9" rx="0.9" ry="0.4" fill="#4a3020" opacity="0.58"/><ellipse cx="127.7" cy="66.6" rx="2.1" ry="0.8" fill="#a07050" opacity="0.42"/><ellipse cx="204.4" cy="56.2" rx="2.1" ry="0.7" fill="#7a5236" opacity="0.67"/><ellipse cx="181.5" cy="111.6" rx="2.2" ry="0.6" fill="#4a3020" opacity="0.43"/><ellipse cx="152.5" cy="106.8" rx="1.3" ry="0.8" fill="#4a3020" opacity="0.68"/><ellipse cx="124.6" cy="43.9" rx="2.2" ry="0.8" fill="#4a3020" opacity="0.32"/><ellipse cx="181.9" cy="72.9" rx="2.3" ry="1.0" fill="#3a2616" opacity="0.42"/><ellipse cx="105.5" cy="48.4" rx="1.0" ry="0.6" fill="#8a5e3c" opacity="0.50"/><ellipse cx="138.9" cy="96.3" rx="2.0" ry="0.5" fill="#3a2616" opacity="0.44"/><ellipse cx="196.7" cy="93.7" rx="2.5" ry="0.4" fill="#a07050" opacity="0.39"/><ellipse cx="183.8" cy="91.7" rx="1.0" ry="0.8" fill="#8a5e3c" opacity="0.53"/><ellipse cx="174.2" cy="94.6" rx="2.5" ry="0.6" fill="#8a5e3c" opacity="0.65"/><ellipse cx="115.3" cy="76.6" rx="1.7" ry="0.4" fill="#4a3020" opacity="0.39"/><ellipse cx="158.1" cy="87.5" rx="1.7" ry="0.5" fill="#7a5236" opacity="0.44"/><ellipse cx="153.6" cy="108.9" rx="2.4" ry="0.9" fill="#a07050" opacity="0.69"/><ellipse cx="125.8" cy="45.4" rx="0.8" ry="0.6" fill="#4a3020" opacity="0.69"/><ellipse cx="123.0" cy="43.6" rx="2.4" ry="0.6" fill="#7a5236" opacity="0.43"/><ellipse cx="107.2" cy="74.0" rx="1.7" ry="0.8" fill="#a07050" opacity="0.69"/><ellipse cx="192.2" cy="93.8" rx="1.5" ry="0.7" fill="#3a2616" opacity="0.45"/><ellipse cx="118.4" cy="97.1" rx="2.2" ry="0.9" fill="#3a2616" opacity="0.55"/><ellipse cx="127.4" cy="77.6" rx="2.0" ry="0.8" fill="#a07050" opacity="0.70"/><ellipse cx="187.2" cy="89.8" rx="2.2" ry="0.9" fill="#8a5e3c" opacity="0.66"/><ellipse cx="108.1" cy="92.1" rx="2.0" ry="0.7" fill="#a07050" opacity="0.57"/><ellipse cx="149.5" cy="83.3" rx="2.1" ry="0.9" fill="#3a2616" opacity="0.50"/><ellipse cx="163.4" cy="114.6" rx="2.2" ry="0.9" fill="#4a3020" opacity="0.65"/><ellipse cx="139.2" cy="7.2" rx="3.8" ry="1.3" fill="#241c14" opacity="0.40"/><ellipse cx="167.1" cy="24.0" rx="4.8" ry="1.4" fill="#3e3024" opacity="0.38"/><ellipse cx="188.8" cy="35.0" rx="3.6" ry="1.2" fill="#241c14" opacity="0.37"/><ellipse cx="117.5" cy="37.5" rx="3.6" ry="1.2" fill="#241c14" opacity="0.54"/><ellipse cx="127.3" cy="11.0" rx="2.5" ry="1.6" fill="#241c14" opacity="0.56"/><ellipse cx="169.5" cy="36.9" rx="3.1" ry="1.5" fill="#241c14" opacity="0.55"/><ellipse cx="115.5" cy="10.4" rx="3.1" ry="1.1" fill="#241c14" opacity="0.50"/><ellipse cx="156.3" cy="15.6" rx="2.8" ry="1.0" fill="#3e3024" opacity="0.43"/><ellipse cx="114.4" cy="27.2" rx="4.3" ry="0.9" fill="#3e3024" opacity="0.50"/><ellipse cx="140.4" cy="23.2" rx="3.9" ry="1.2" fill="#3e3024" opacity="0.54"/><ellipse cx="128.8" cy="24.5" rx="3.7" ry="0.8" fill="#3e3024" opacity="0.35"/><ellipse cx="176.3" cy="14.6" rx="2.8" ry="1.0" fill="#241c14" opacity="0.43"/><ellipse cx="156.6" cy="22.3" rx="2.6" ry="1.1" fill="#3e3024" opacity="0.54"/><ellipse cx="166.0" cy="18.0" rx="4.2" ry="1.1" fill="#3e3024" opacity="0.31"/><ellipse cx="179.8" cy="38.9" rx="3.9" ry="1.4" fill="#241c14" opacity="0.41"/><ellipse cx="142.3" cy="25.3" rx="4.9" ry="1.5" fill="#3e3024" opacity="0.47"/><ellipse cx="109.5" cy="12.1" rx="2.2" ry="1.2" fill="#3e3024" opacity="0.42"/><ellipse cx="145.3" cy="37.8" rx="2.3" ry="1.3" fill="#3e3024" opacity="0.58"/><ellipse cx="174.5" cy="20.3" rx="2.5" ry="0.9" fill="#241c14" opacity="0.42"/><ellipse cx="116.8" cy="31.3" rx="4.0" ry="1.4" fill="#3e3024" opacity="0.42"/><ellipse cx="107.1" cy="28.8" rx="4.3" ry="1.4" fill="#241c14" opacity="0.34"/><ellipse cx="125.5" cy="7.7" rx="2.3" ry="0.9" fill="#3e3024" opacity="0.53"/><ellipse cx="160.6" cy="6.9" rx="4.1" ry="1.2" fill="#3e3024" opacity="0.32"/><ellipse cx="173.5" cy="19.6" rx="5.0" ry="1.5" fill="#3e3024" opacity="0.56"/><ellipse cx="117.8" cy="16.7" rx="2.6" ry="1.2" fill="#3e3024" opacity="0.46"/><ellipse cx="111.8" cy="18.4" rx="3.7" ry="1.2" fill="#241c14" opacity="0.43"/><ellipse cx="108.2" cy="15.7" rx="4.4" ry="1.5" fill="#241c14" opacity="0.38"/><ellipse cx="123.6" cy="6.8" rx="4.8" ry="1.3" fill="#241c14" opacity="0.51"/><ellipse cx="117.4" cy="37.6" rx="2.6" ry="1.5" fill="#241c14" opacity="0.47"/><ellipse cx="108.2" cy="16.0" rx="3.2" ry="1.3" fill="#3e3024" opacity="0.40"/><ellipse cx="130.9" cy="32.9" rx="2.6" ry="1.0" fill="#241c14" opacity="0.59"/><ellipse cx="165.3" cy="19.2" rx="2.6" ry="1.0" fill="#241c14" opacity="0.35"/><ellipse cx="190.5" cy="9.4" rx="4.6" ry="0.9" fill="#3e3024" opacity="0.48"/><ellipse cx="121.4" cy="37.3" rx="3.5" ry="1.3" fill="#3e3024" opacity="0.50"/><ellipse cx="133.1" cy="12.4" rx="2.4" ry="1.5" fill="#3e3024" opacity="0.36"/><ellipse cx="113.3" cy="8.3" rx="4.9" ry="1.1" fill="#3e3024" opacity="0.50"/><ellipse cx="129.3" cy="36.7" rx="2.5" ry="0.8" fill="#241c14" opacity="0.51"/><ellipse cx="107.3" cy="34.3" rx="4.3" ry="1.5" fill="#241c14" opacity="0.54"/><ellipse cx="175.1" cy="30.2" rx="4.7" ry="1.1" fill="#241c14" opacity="0.55"/><ellipse cx="118.5" cy="33.0" rx="3.2" ry="0.8" fill="#3e3024" opacity="0.41"/></g><g transform="translate(103 0)"><g filter="url(#b2)"><path d="M82 30C90 24 96 30 96 42C94 58 88 72 82 78L78 64Z" fill="#120c08" opacity="0.9"/></g><g filter="url(#b1)"><path d="M2 56C12 53 24 57 32 64C36 68 38 72 38 76L33 78C26 72 16 63 2 60Z" fill="url(#tailg)"/><path d="M38 72C36 58 42 46 55 40C62 36 70 36 76 40C82 46 84 56 80 62C78 70 76 80 72 88L44 90C40 84 38 78 38 72Z" fill="#e3cfae"/><path d="M56 36C62 30 72 28 80 32C84 36 84 44 82 50C76 48 68 46 60 44C56 42 54 40 56 36Z" fill="#cc9a68"/><ellipse cx="55" cy="78" rx="16" ry="11" fill="#f2ebdd"/><path d="M45 88L49 106L46 107L42 90ZM70 86L82 100L79 102L67 90Z" fill="#e6d2b4"/></g><ellipse cx="58" cy="36" rx="5" ry="4.6" fill="#d8a6a0"/><path d="M78 31L90 19L83 36Z" fill="#b8845a"/><circle cx="67" cy="45" r="2.6" fill="#0e0a08"/><ellipse cx="81" cy="55" rx="2" ry="1.6" fill="#d49488"/><ellipse cx="48" cy="107" rx="3" ry="2" fill="#d89a9a" opacity="0.8"/><ellipse cx="81" cy="101" rx="3" ry="2" fill="#d89a9a" opacity="0.8"/></g></g><g clip-path="url(#c3)"><rect x="205" y="0" width="102" height="115" fill="url(#sqb)"/><g filter="url(#b2)"><ellipse cx="212" cy="25" rx="12" ry="22" fill="#cdc9c4"/><ellipse cx="298" cy="14" rx="16" ry="14" fill="#3f6e36"/><ellipse cx="265" cy="18" rx="16" ry="10" fill="#a29c94"/><ellipse cx="268" cy="48" rx="14" ry="14" fill="#b8b2aa"/><ellipse cx="209" cy="58" rx="8" ry="14" fill="#5e5a52"/><ellipse cx="290" cy="40" rx="8" ry="12" fill="#4a4640"/></g><g filter="url(#b1)"><ellipse cx="295" cy="62" rx="10" ry="27" transform="rotate(-12 295 62)" fill="#5a5a5a"/><path d="M220 46C226 34 242 30 256 40C270 52 284 70 293 92L296 115H250L230 96C222 82 216 62 220 46Z" fill="#b8a98f"/><path d="M258 44C270 54 282 68 290 86L286 90C278 72 268 60 256 50Z" fill="#d8cfbe"/><path d="M262 56C272 66 280 78 286 92L282 94C276 80 268 70 258 62Z" fill="#857560"/><ellipse cx="229" cy="31" rx="15" ry="18" transform="rotate(-8 229 31)" fill="#c4baa8"/><ellipse cx="230" cy="46" rx="11" ry="8" fill="#cbbfa8"/><path d="M205 74C212 70 226 70 240 76C252 82 262 94 272 104C280 110 292 112 307 108V115H205Z" fill="#e4e0d8"/></g><path d="M215 14L219 6L224 17ZM233 11L236 6L241 16Z" fill="#a89274"/><circle cx="237" cy="31" r="2.5" fill="#0e0e0e"/><circle cx="217" cy="36" r="1.8" fill="#0e0e0e"/><ellipse cx="227" cy="46" rx="3.2" ry="2.4" fill="#6a625a"/><g filter="url(#b05)"><ellipse cx="243.4" cy="90.7" rx="4.1" ry="1.3" fill="#c8c2b8" opacity="0.56"/><ellipse cx="216.0" cy="94.0" rx="2.3" ry="2.2" fill="#b0a89e" opacity="0.55"/><ellipse cx="260.4" cy="113.9" rx="3.6" ry="1.4" fill="#c8c2b8" opacity="0.64"/><ellipse cx="250.0" cy="98.9" rx="2.6" ry="1.4" fill="#9a9288" opacity="0.62"/><ellipse cx="240.0" cy="106.7" rx="2.4" ry="1.4" fill="#9a9288" opacity="0.86"/><ellipse cx="255.7" cy="90.8" rx="2.1" ry="1.9" fill="#b0a89e" opacity="0.89"/><ellipse cx="225.7" cy="112.3" rx="2.9" ry="1.3" fill="#c8c2b8" opacity="0.64"/><ellipse cx="233.9" cy="93.9" rx="2.5" ry="2.2" fill="#b0a89e" opacity="0.62"/><ellipse cx="209.2" cy="100.8" rx="4.2" ry="1.2" fill="#9a9288" opacity="0.56"/><ellipse cx="228.6" cy="85.1" rx="3.5" ry="1.1" fill="#9a9288" opacity="0.76"/><ellipse cx="212.9" cy="101.3" rx="2.2" ry="2.1" fill="#b0a89e" opacity="0.79"/><ellipse cx="226.6" cy="103.9" rx="3.0" ry="2.3" fill="#9a9288" opacity="0.85"/><ellipse cx="233.8" cy="88.5" rx="2.3" ry="1.4" fill="#9a9288" opacity="0.56"/><ellipse cx="221.2" cy="100.2" rx="3.4" ry="1.2" fill="#b0a89e" opacity="0.71"/><ellipse cx="235.4" cy="95.0" rx="2.9" ry="1.8" fill="#9a9288" opacity="0.90"/><ellipse cx="259.5" cy="105.8" rx="3.5" ry="2.3" fill="#c8c2b8" opacity="0.51"/><ellipse cx="261.6" cy="98.7" rx="3.7" ry="2.0" fill="#c8c2b8" opacity="0.59"/><ellipse cx="250.0" cy="88.6" rx="5.0" ry="1.6" fill="#b0a89e" opacity="0.75"/><ellipse cx="211.6" cy="101.1" rx="2.3" ry="1.9" fill="#9a9288" opacity="0.59"/><ellipse cx="240.7" cy="107.5" rx="4.5" ry="2.2" fill="#c8c2b8" opacity="0.53"/><ellipse cx="225.2" cy="86.9" rx="3.9" ry="2.0" fill="#9a9288" opacity="0.83"/><ellipse cx="225.5" cy="108.3" rx="3.8" ry="1.3" fill="#b0a89e" opacity="0.63"/><ellipse cx="260.9" cy="107.6" rx="2.3" ry="1.4" fill="#9a9288" opacity="0.79"/><ellipse cx="245.7" cy="88.5" rx="4.3" ry="1.3" fill="#b0a89e" opacity="0.87"/><ellipse cx="246.2" cy="105.3" rx="5.0" ry="2.2" fill="#9a9288" opacity="0.69"/><ellipse cx="234.8" cy="107.4" rx="4.3" ry="2.0" fill="#9a9288" opacity="0.58"/><ellipse cx="242.5" cy="109.4" rx="2.3" ry="2.1" fill="#b0a89e" opacity="0.64"/><ellipse cx="214.7" cy="113.0" rx="4.3" ry="1.7" fill="#c8c2b8" opacity="0.60"/><ellipse cx="246.6" cy="93.1" rx="4.2" ry="2.2" fill="#9a9288" opacity="0.82"/><ellipse cx="240.4" cy="97.1" rx="4.4" ry="2.3" fill="#c8c2b8" opacity="0.62"/><ellipse cx="265.6" cy="98.9" rx="2.3" ry="2.4" fill="#c06a30" opacity="0.90"/><ellipse cx="221.6" cy="107.5" rx="2.7" ry="1.8" fill="#b05a20" opacity="0.84"/><ellipse cx="260.4" cy="100.1" rx="4.7" ry="1.1" fill="#c06a30" opacity="0.87"/><ellipse cx="230.5" cy="101.5" rx="4.5" ry="1.6" fill="#a04e18" opacity="0.72"/><ellipse cx="246.5" cy="107.4" rx="4.0" ry="2.3" fill="#a04e18" opacity="0.81"/><ellipse cx="224.9" cy="92.4" rx="2.0" ry="1.2" fill="#c06a30" opacity="0.90"/><ellipse cx="232.0" cy="100.9" rx="2.4" ry="1.8" fill="#a04e18" opacity="0.72"/><ellipse cx="230.4" cy="97.0" rx="2.9" ry="1.1" fill="#b05a20" opacity="0.77"/><ellipse cx="249.5" cy="96.4" rx="3.6" ry="1.3" fill="#c06a30" opacity="0.75"/><ellipse cx="244.9" cy="94.5" rx="3.2" ry="1.5" fill="#b05a20" opacity="0.74"/><ellipse cx="216.4" cy="93.8" rx="4.6" ry="2.3" fill="#c06a30" opacity="0.78"/><ellipse cx="225.7" cy="108.5" rx="2.6" ry="2.2" fill="#c06a30" opacity="0.74"/><ellipse cx="238.7" cy="84.0" rx="2.3" ry="1.3" fill="#b05a20" opacity="0.84"/><ellipse cx="246.7" cy="104.6" rx="2.3" ry="1.8" fill="#c06a30" opacity="0.92"/><ellipse cx="237.9" cy="94.5" rx="4.0" ry="1.1" fill="#a04e18" opacity="0.86"/><ellipse cx="233.5" cy="110.8" rx="2.9" ry="2.0" fill="#a04e18" opacity="0.87"/><ellipse cx="296" cy="110" rx="12" ry="6" fill="#8a8680" opacity="0.7"/></g></g><g clip-path="url(#c4)"><rect x="0" y="115" width="154" height="115" fill="url(#bvg)"/><g filter="url(#b05)"><ellipse cx="144.4" cy="210.9" rx="2.1" ry="0.9" fill="#cabfae" opacity="0.58"/><ellipse cx="150.3" cy="135.7" rx="1.6" ry="0.9" fill="#cabfae" opacity="0.78"/><ellipse cx="137.2" cy="202.9" rx="0.8" ry="0.8" fill="#8e806c" opacity="0.47"/><ellipse cx="146.8" cy="219.1" rx="1.1" ry="1.2" fill="#7e705e" opacity="0.65"/><ellipse cx="153.6" cy="147.4" rx="1.7" ry="0.7" fill="#bcae9a" opacity="0.79"/><ellipse cx="4.0" cy="184.8" rx="1.7" ry="1.1" fill="#8e806c" opacity="0.74"/><ellipse cx="58.6" cy="226.3" rx="1.8" ry="0.7" fill="#bcae9a" opacity="0.48"/><ellipse cx="88.6" cy="212.6" rx="2.1" ry="0.7" fill="#bcae9a" opacity="0.80"/><ellipse cx="9.5" cy="160.8" rx="1.8" ry="1.2" fill="#7e705e" opacity="0.69"/><ellipse cx="149.6" cy="207.7" rx="2.1" ry="0.6" fill="#bcae9a" opacity="0.55"/><ellipse cx="145.3" cy="149.7" rx="2.1" ry="0.8" fill="#bcae9a" opacity="0.74"/><ellipse cx="55.7" cy="162.0" rx="1.2" ry="0.7" fill="#8e806c" opacity="0.85"/><ellipse cx="69.3" cy="213.7" rx="1.9" ry="0.8" fill="#7e705e" opacity="0.48"/><ellipse cx="116.6" cy="177.0" rx="1.9" ry="0.7" fill="#8e806c" opacity="0.58"/><ellipse cx="141.3" cy="182.9" rx="2.0" ry="0.6" fill="#bcae9a" opacity="0.62"/><ellipse cx="1.8" cy="183.2" rx="1.3" ry="1.3" fill="#bcae9a" opacity="0.53"/><ellipse cx="37.5" cy="137.0" rx="1.9" ry="1.0" fill="#cabfae" opacity="0.61"/><ellipse cx="124.4" cy="141.1" rx="1.0" ry="0.6" fill="#bcae9a" opacity="0.76"/><ellipse cx="114.3" cy="141.8" rx="1.4" ry="1.3" fill="#8e806c" opacity="0.77"/><ellipse cx="52.6" cy="169.3" rx="1.3" ry="0.6" fill="#bcae9a" opacity="0.84"/><ellipse cx="81.9" cy="182.1" rx="1.0" ry="0.8" fill="#bcae9a" opacity="0.43"/><ellipse cx="63.6" cy="180.2" rx="1.6" ry="0.8" fill="#7e705e" opacity="0.69"/><ellipse cx="42.2" cy="214.5" rx="1.0" ry="1.0" fill="#7e705e" opacity="0.78"/><ellipse cx="77.1" cy="219.8" rx="1.8" ry="1.2" fill="#cabfae" opacity="0.72"/><ellipse cx="135.3" cy="143.1" rx="1.7" ry="0.7" fill="#8e806c" opacity="0.43"/><ellipse cx="92.9" cy="212.4" rx="1.7" ry="1.2" fill="#bcae9a" opacity="0.55"/><ellipse cx="55.4" cy="186.9" rx="1.3" ry="1.1" fill="#cabfae" opacity="0.44"/><ellipse cx="129.1" cy="162.5" rx="1.4" ry="1.1" fill="#cabfae" opacity="0.62"/><ellipse cx="77.5" cy="227.7" rx="0.9" ry="1.2" fill="#cabfae" opacity="0.46"/><ellipse cx="34.6" cy="192.9" rx="2.2" ry="0.9" fill="#bcae9a" opacity="0.52"/><ellipse cx="85.7" cy="212.0" rx="2.0" ry="1.1" fill="#bcae9a" opacity="0.67"/><ellipse cx="4.7" cy="207.8" rx="1.9" ry="0.7" fill="#cabfae" opacity="0.59"/><ellipse cx="147.0" cy="157.4" rx="1.6" ry="0.8" fill="#cabfae" opacity="0.66"/><ellipse cx="90.7" cy="152.6" rx="1.9" ry="1.3" fill="#cabfae" opacity="0.56"/><ellipse cx="151.9" cy="137.1" rx="1.6" ry="0.8" fill="#8e806c" opacity="0.88"/><ellipse cx="135.6" cy="191.8" rx="1.3" ry="0.7" fill="#7e705e" opacity="0.60"/><ellipse cx="43.5" cy="149.4" rx="1.4" ry="0.7" fill="#cabfae" opacity="0.75"/><ellipse cx="30.3" cy="156.6" rx="1.8" ry="1.3" fill="#bcae9a" opacity="0.86"/><ellipse cx="111.3" cy="202.0" rx="1.3" ry="0.8" fill="#cabfae" opacity="0.82"/><ellipse cx="98.8" cy="204.7" rx="1.6" ry="1.0" fill="#bcae9a" opacity="0.68"/><ellipse cx="48.6" cy="165.5" rx="0.9" ry="0.6" fill="#cabfae" opacity="0.58"/><ellipse cx="138.4" cy="210.4" rx="1.9" ry="0.8" fill="#8e806c" opacity="0.83"/><ellipse cx="56.0" cy="218.4" rx="2.2" ry="1.2" fill="#8e806c" opacity="0.80"/><ellipse cx="73.3" cy="212.2" rx="2.0" ry="0.9" fill="#7e705e" opacity="0.53"/><ellipse cx="59.9" cy="165.4" rx="2.1" ry="0.7" fill="#cabfae" opacity="0.54"/><ellipse cx="125.5" cy="181.9" rx="1.0" ry="1.2" fill="#8e806c" opacity="0.62"/><ellipse cx="21.3" cy="141.1" rx="0.8" ry="1.2" fill="#8e806c" opacity="0.89"/><ellipse cx="13.3" cy="208.0" rx="2.0" ry="0.9" fill="#7e705e" opacity="0.44"/><ellipse cx="49.8" cy="192.5" rx="1.5" ry="1.0" fill="#8e806c" opacity="0.50"/><ellipse cx="37.5" cy="220.6" rx="2.0" ry="0.6" fill="#8e806c" opacity="0.84"/><ellipse cx="145.5" cy="174.0" rx="1.9" ry="1.0" fill="#8e806c" opacity="0.76"/><ellipse cx="132.7" cy="146.9" rx="1.8" ry="0.9" fill="#7e705e" opacity="0.84"/><ellipse cx="93.3" cy="141.8" rx="1.6" ry="0.6" fill="#8e806c" opacity="0.52"/><ellipse cx="152.0" cy="152.9" rx="1.6" ry="1.1" fill="#8e806c" opacity="0.51"/><ellipse cx="113.7" cy="194.8" rx="0.9" ry="1.3" fill="#7e705e" opacity="0.80"/><ellipse cx="5.9" cy="134.9" rx="2.1" ry="1.3" fill="#7e705e" opacity="0.79"/><ellipse cx="6.8" cy="185.6" rx="1.2" ry="0.6" fill="#8e806c" opacity="0.41"/><ellipse cx="116.6" cy="140.4" rx="1.1" ry="1.1" fill="#cabfae" opacity="0.48"/><ellipse cx="78.9" cy="140.6" rx="2.1" ry="0.5" fill="#8e806c" opacity="0.83"/><ellipse cx="85.6" cy="212.1" rx="1.8" ry="1.0" fill="#cabfae" opacity="0.71"/><ellipse cx="70.4" cy="197.1" rx="0.8" ry="1.2" fill="#7e705e" opacity="0.81"/><ellipse cx="70.5" cy="142.2" rx="1.7" ry="1.3" fill="#7e705e" opacity="0.71"/><ellipse cx="13.3" cy="182.0" rx="0.9" ry="0.7" fill="#cabfae" opacity="0.84"/><ellipse cx="151.5" cy="139.0" rx="1.2" ry="1.1" fill="#bcae9a" opacity="0.47"/><ellipse cx="93.4" cy="227.9" rx="0.8" ry="0.6" fill="#7e705e" opacity="0.46"/><ellipse cx="106.6" cy="189.9" rx="1.4" ry="0.8" fill="#8e806c" opacity="0.71"/><ellipse cx="99.9" cy="221.6" rx="2.1" ry="1.2" fill="#cabfae" opacity="0.76"/><ellipse cx="4.7" cy="198.1" rx="1.9" ry="0.5" fill="#8e806c" opacity="0.71"/><ellipse cx="45.2" cy="155.5" rx="1.2" ry="0.7" fill="#7e705e" opacity="0.57"/><ellipse cx="50.0" cy="139.5" rx="1.0" ry="1.3" fill="#8e806c" opacity="0.73"/><ellipse cx="72.9" cy="192.3" rx="1.2" ry="0.7" fill="#bcae9a" opacity="0.61"/><ellipse cx="3.2" cy="153.1" rx="2.1" ry="0.8" fill="#bcae9a" opacity="0.79"/><ellipse cx="119.3" cy="219.0" rx="1.5" ry="0.6" fill="#cabfae" opacity="0.81"/><ellipse cx="48.3" cy="192.7" rx="0.9" ry="0.6" fill="#bcae9a" opacity="0.63"/><ellipse cx="32.6" cy="135.3" rx="2.1" ry="0.8" fill="#7e705e" opacity="0.86"/><ellipse cx="106.2" cy="226.7" rx="1.7" ry="0.7" fill="#cabfae" opacity="0.78"/><ellipse cx="136.4" cy="201.4" rx="1.8" ry="1.3" fill="#8e806c" opacity="0.49"/><ellipse cx="67.5" cy="198.7" rx="1.9" ry="0.7" fill="#bcae9a" opacity="0.53"/><ellipse cx="4.3" cy="199.1" rx="1.7" ry="1.0" fill="#7e705e" opacity="0.73"/><ellipse cx="114.0" cy="144.2" rx="1.6" ry="1.1" fill="#cabfae" opacity="0.55"/><ellipse cx="9.8" cy="136.7" rx="0.9" ry="0.6" fill="#cabfae" opacity="0.68"/><ellipse cx="111.3" cy="194.8" rx="2.1" ry="0.9" fill="#bcae9a" opacity="0.85"/><ellipse cx="39.3" cy="169.5" rx="1.4" ry="1.1" fill="#7e705e" opacity="0.45"/><ellipse cx="143.6" cy="164.2" rx="0.8" ry="1.2" fill="#7e705e" opacity="0.51"/><ellipse cx="131.7" cy="210.3" rx="1.2" ry="0.5" fill="#bcae9a" opacity="0.49"/><ellipse cx="139.4" cy="145.8" rx="1.7" ry="0.6" fill="#bcae9a" opacity="0.47"/><ellipse cx="15.0" cy="228.3" rx="1.2" ry="0.6" fill="#8e806c" opacity="0.69"/><ellipse cx="9.6" cy="159.6" rx="2.0" ry="0.6" fill="#bcae9a" opacity="0.88"/><ellipse cx="56.0" cy="202.3" rx="1.3" ry="1.1" fill="#7e705e" opacity="0.59"/><ellipse cx="25.6" cy="196.3" rx="2.1" ry="0.6" fill="#7e705e" opacity="0.78"/><ellipse cx="143.6" cy="133.0" rx="2.0" ry="1.1" fill="#7e705e" opacity="0.83"/><ellipse cx="37.1" cy="219.3" rx="2.0" ry="0.5" fill="#bcae9a" opacity="0.73"/><ellipse cx="128.8" cy="153.5" rx="1.5" ry="0.9" fill="#cabfae" opacity="0.45"/><ellipse cx="85.5" cy="179.2" rx="1.0" ry="0.9" fill="#8e806c" opacity="0.49"/><ellipse cx="35.5" cy="174.0" rx="1.1" ry="0.7" fill="#cabfae" opacity="0.62"/><ellipse cx="36.8" cy="163.9" rx="0.9" ry="0.7" fill="#cabfae" opacity="0.77"/><ellipse cx="86.7" cy="217.0" rx="1.0" ry="1.3" fill="#8e806c" opacity="0.66"/><ellipse cx="36.9" cy="147.1" rx="1.1" ry="0.6" fill="#bcae9a" opacity="0.53"/><ellipse cx="142.3" cy="176.1" rx="0.9" ry="0.9" fill="#7e705e" opacity="0.56"/><ellipse cx="31.6" cy="196.3" rx="0.9" ry="1.1" fill="#bcae9a" opacity="0.64"/><ellipse cx="39.6" cy="181.0" rx="1.7" ry="1.0" fill="#cabfae" opacity="0.42"/><ellipse cx="99.9" cy="207.3" rx="1.7" ry="0.6" fill="#7e705e" opacity="0.80"/><ellipse cx="145.6" cy="204.0" rx="1.7" ry="1.0" fill="#bcae9a" opacity="0.75"/><ellipse cx="2.4" cy="175.8" rx="1.4" ry="1.2" fill="#cabfae" opacity="0.54"/><ellipse cx="150.2" cy="213.9" rx="1.8" ry="1.0" fill="#bcae9a" opacity="0.87"/><ellipse cx="61.9" cy="197.9" rx="1.3" ry="0.9" fill="#cabfae" opacity="0.43"/><ellipse cx="57.6" cy="215.3" rx="1.7" ry="0.7" fill="#8e806c" opacity="0.85"/><ellipse cx="29.6" cy="177.0" rx="2.2" ry="0.9" fill="#bcae9a" opacity="0.51"/><ellipse cx="148.0" cy="162.2" rx="1.0" ry="0.8" fill="#8e806c" opacity="0.75"/><ellipse cx="87.6" cy="207.0" rx="2.0" ry="0.5" fill="#7e705e" opacity="0.70"/><ellipse cx="39.7" cy="175.4" rx="1.0" ry="0.7" fill="#8e806c" opacity="0.46"/><ellipse cx="147.9" cy="144.9" rx="2.2" ry="0.6" fill="#7e705e" opacity="0.56"/><ellipse cx="116.0" cy="146.8" rx="1.0" ry="1.0" fill="#8e806c" opacity="0.63"/><ellipse cx="63.0" cy="218.8" rx="2.0" ry="1.3" fill="#7e705e" opacity="0.53"/><ellipse cx="145.1" cy="170.8" rx="1.4" ry="1.2" fill="#cabfae" opacity="0.88"/><ellipse cx="139.2" cy="137.1" rx="2.0" ry="0.8" fill="#7e705e" opacity="0.66"/><ellipse cx="130.7" cy="210.7" rx="1.4" ry="0.9" fill="#cabfae" opacity="0.67"/><ellipse cx="104.7" cy="167.0" rx="1.4" ry="1.0" fill="#7e705e" opacity="0.53"/><ellipse cx="58.8" cy="215.9" rx="1.7" ry="0.8" fill="#bcae9a" opacity="0.88"/><ellipse cx="39.6" cy="212.2" rx="1.7" ry="0.9" fill="#cabfae" opacity="0.74"/><ellipse cx="123.1" cy="131.0" rx="1.3" ry="1.1" fill="#8e806c" opacity="0.88"/><ellipse cx="137.0" cy="176.6" rx="1.9" ry="0.7" fill="#bcae9a" opacity="0.62"/><ellipse cx="147.5" cy="150.7" rx="1.4" ry="0.6" fill="#8e806c" opacity="0.77"/><ellipse cx="57.1" cy="200.8" rx="1.7" ry="1.1" fill="#8e806c" opacity="0.46"/><ellipse cx="34.3" cy="151.5" rx="1.0" ry="0.9" fill="#bcae9a" opacity="0.84"/><ellipse cx="94.9" cy="194.6" rx="1.6" ry="1.3" fill="#8e806c" opacity="0.69"/><ellipse cx="54.8" cy="200.4" rx="1.2" ry="1.1" fill="#8e806c" opacity="0.75"/><ellipse cx="104.2" cy="208.1" rx="1.3" ry="1.3" fill="#8e806c" opacity="0.78"/><ellipse cx="128.7" cy="194.2" rx="1.8" ry="1.3" fill="#7e705e" opacity="0.50"/><ellipse cx="118.0" cy="160.1" rx="1.0" ry="0.6" fill="#bcae9a" opacity="0.63"/><ellipse cx="102.5" cy="206.7" rx="1.1" ry="0.5" fill="#cabfae" opacity="0.67"/><ellipse cx="111.7" cy="157.2" rx="1.9" ry="1.2" fill="#cabfae" opacity="0.44"/><ellipse cx="38.3" cy="147.4" rx="1.2" ry="1.1" fill="#7e705e" opacity="0.89"/><ellipse cx="3.0" cy="141.4" rx="2.2" ry="0.6" fill="#cabfae" opacity="0.57"/><ellipse cx="80.4" cy="162.0" rx="1.8" ry="1.2" fill="#8e806c" opacity="0.57"/><ellipse cx="142.8" cy="156.4" rx="0.9" ry="1.0" fill="#bcae9a" opacity="0.75"/><ellipse cx="40.5" cy="209.2" rx="1.3" ry="0.9" fill="#bcae9a" opacity="0.49"/><ellipse cx="143.1" cy="186.0" rx="1.9" ry="1.2" fill="#cabfae" opacity="0.61"/><ellipse cx="45.5" cy="131.7" rx="1.9" ry="1.1" fill="#bcae9a" opacity="0.45"/><ellipse cx="90.3" cy="149.1" rx="1.9" ry="1.1" fill="#8e806c" opacity="0.52"/><ellipse cx="14.4" cy="196.3" rx="1.0" ry="0.7" fill="#8e806c" opacity="0.69"/><ellipse cx="16.6" cy="193.4" rx="1.9" ry="0.9" fill="#7e705e" opacity="0.66"/><ellipse cx="51.1" cy="135.7" rx="1.8" ry="0.7" fill="#7e705e" opacity="0.55"/><ellipse cx="98.5" cy="199.1" rx="2.1" ry="0.7" fill="#7e705e" opacity="0.56"/><ellipse cx="102.0" cy="156.1" rx="0.9" ry="0.9" fill="#7e705e" opacity="0.57"/><ellipse cx="108.4" cy="198.1" rx="1.4" ry="0.9" fill="#bcae9a" opacity="0.55"/><ellipse cx="119.3" cy="161.6" rx="0.9" ry="0.9" fill="#bcae9a" opacity="0.48"/><ellipse cx="143.5" cy="217.7" rx="0.8" ry="0.8" fill="#8e806c" opacity="0.79"/><ellipse cx="110.6" cy="217.0" rx="1.5" ry="1.1" fill="#8e806c" opacity="0.45"/><ellipse cx="10.8" cy="168.7" rx="0.9" ry="1.1" fill="#8e806c" opacity="0.66"/></g><g filter="url(#b2)"><rect x="0" y="113" width="154" height="14" fill="#7c7866"/><ellipse cx="128" cy="123" rx="12" ry="9" fill="#b4b6ae"/><ellipse cx="112" cy="121" rx="6" ry="5" fill="#7ab654"/><ellipse cx="36" cy="131" rx="4" ry="3" fill="#5a9a40"/><ellipse cx="147" cy="125" rx="6" ry="12" fill="#4a4436"/></g><g filter="url(#b1)"><path d="M38 175C36 145 48 120 75 117C105 115 125 140 130 170C134 195 128 215 110 220C90 225 60 223 45 215C38 205 38 190 38 175Z" fill="#5a321e"/><ellipse cx="70" cy="155" rx="32" ry="34" fill="#93512a"/><ellipse cx="48" cy="182" rx="10" ry="13" fill="#a65a28"/><ellipse cx="110" cy="170" rx="14" ry="26" fill="#6e3c20"/><ellipse cx="85" cy="200" rx="42" ry="18" fill="#3e2416"/><ellipse cx="75" cy="143" rx="12" ry="17" fill="#8a6850"/><ellipse cx="80" cy="147" rx="6" ry="8" fill="#a28266"/><ellipse cx="60" cy="173" rx="7" ry="6" fill="#4a3226"/><ellipse cx="73" cy="175" rx="7" ry="6" fill="#4a3226"/><path d="M16 215L45 205L50 215L24 222Z" fill="#4a3a30"/><path d="M90 215L112 210L114 225L95 228Z" fill="#4a3a30"/></g><ellipse cx="75" cy="135" rx="4.5" ry="3.6" fill="#2a2222"/><ellipse cx="72" cy="153" rx="4.5" ry="2.6" fill="#3a2018"/><circle cx="62" cy="129" r="1.4" fill="#1a1410"/><circle cx="85" cy="128" r="1.4" fill="#1a1410"/><path d="M30 230C35 215 55 208 75 208C88 208 92 215 88 230Z" fill="#6a6462"/></g><g clip-path="url(#c5)"><rect x="154" y="115" width="153" height="115" fill="url(#msb)"/><g transform="translate(154 115)"><g filter="url(#b1)"><path d="M1 16C6 6 18 8 28 18L36 28" fill="none" stroke="#8a8480" stroke-width="4"/><ellipse cx="88" cy="94" rx="55" ry="8" fill="#4cb2da" opacity="0.5"/><path d="M24 55C26 35 45 24 70 22C90 21 100 28 110 35C120 38 130 42 138 50C146 56 150 64 148 70C146 74 140 76 132 76C125 82 118 88 105 92C85 96 55 92 40 85C28 78 24 68 24 55Z" fill="#7a6e65"/><ellipse cx="68" cy="38" rx="34" ry="13" fill="#5f544c"/><ellipse cx="92" cy="82" rx="36" ry="9" fill="#a39890"/><ellipse cx="128" cy="62" rx="17" ry="13" fill="#857468"/><ellipse cx="93" cy="50" rx="9" ry="11" transform="rotate(-15 93 50)" fill="#a8948c"/></g><path d="M120 36L126 25L131 40Z" fill="#8a7c74"/><circle cx="120" cy="57" r="2.8" fill="#0e0e0e"/><ellipse cx="144" cy="67" rx="3" ry="2.5" fill="#b08880"/><g fill="#eccfc6" filter="url(#b05)"><ellipse cx="30" cy="79" rx="6" ry="3.5"/><ellipse cx="85" cy="100" rx="6" ry="3"/><ellipse cx="125" cy="103" rx="6" ry="3"/></g></g></g></svg>
<div class="t" style="left:1129.5px;transform:translateX(-50%);top:546.87px;font-size:13.65px;line-height:18px;color:#202122;font-family:'Liberation Sans', sans-serif;font-weight:normal;font-style:normal;">1-й ряд: <span style="color:#0645ad">капибара</span>, <span style="color:#0645ad">долгоног</span>, <span style="color:#0645ad">золотистый</span></div>
<div class="t" style="left:1129.5px;transform:translateX(-50%);top:567.57px;font-size:13.65px;line-height:18px;color:#202122;font-family:'Liberation Sans', sans-serif;font-weight:normal;font-style:normal;"><span style="color:#0645ad">суслик</span>;</div>
<div class="t" style="left:1129.5px;transform:translateX(-50%);top:588.17px;font-size:13.65px;line-height:18px;color:#202122;font-family:'Liberation Sans', sans-serif;font-weight:normal;font-style:normal;">2-й ряд: <span style="color:#0645ad">канадский бобр</span>, <span style="color:#0645ad">домовая мышь</span>.</div>
<div class="r" style="left:976px;top:611px;width:307px;height:22px;background:#ffd0d9;"></div>
<div class="t" style="left:1129.5px;transform:translateX(-50%);top:611.80px;font-size:15px;line-height:20px;color:#202122;font-family:'Liberation Sans', sans-serif;font-weight:normal;font-style:normal;"><b style="color:#0645ad">Научная классификация</b></div>
<div class="t" style="right:52px;top:638.58px;font-size:14.2px;line-height:18px;color:#202122;font-family:'Liberation Sans', sans-serif;font-weight:normal;font-style:normal;">[<span style="color:#0645ad">подробно</span>]</div>
<div class="t" style="right:238px;top:657.58px;font-size:14.2px;line-height:18px;color:#202122;font-family:'Liberation Sans', sans-serif;font-weight:normal;font-style:normal;">Домен:</div>
<div class="t" style="left:1099.3px;top:657.58px;font-size:14.2px;line-height:18px;color:#0645ad;font-family:'Liberation Sans', sans-serif;font-weight:normal;font-style:normal;">Эукариоты</div>
<div class="t" style="right:238px;top:678.08px;font-size:14.2px;line-height:18px;color:#202122;font-family:'Liberation Sans', sans-serif;font-weight:normal;font-style:normal;">Царство:</div>
<div class="t" style="left:1099.3px;top:678.08px;font-size:14.2px;line-height:18px;color:#0645ad;font-family:'Liberation Sans', sans-serif;font-weight:normal;font-style:normal;">Животные</div>
<div class="t" style="right:238px;top:698.48px;font-size:14.2px;line-height:18px;color:#202122;font-family:'Liberation Sans', sans-serif;font-weight:normal;font-style:normal;">Тип:</div>
<div class="t" style="left:1099.3px;top:698.48px;font-size:14.2px;line-height:18px;color:#0645ad;font-family:'Liberation Sans', sans-serif;font-weight:normal;font-style:normal;">Хордовые</div>
<div class="t" style="right:238px;top:719.08px;font-size:14.2px;line-height:18px;color:#202122;font-family:'Liberation Sans', sans-serif;font-weight:normal;font-style:normal;">Класс:</div>
<div class="t" style="left:1099.3px;top:719.08px;font-size:14.2px;line-height:18px;color:#0645ad;font-family:'Liberation Sans', sans-serif;font-weight:normal;font-style:normal;">Млекопитающие</div>
<div class="r" style="left:1318px;top:77px;width:14px;height:651px;background:#f0f0f0;"></div>
<div class="r" style="left:1319px;top:92px;width:12px;height:31px;background:#c2c2c2;"></div>
<svg class="r" style="left:1318px;top:79px" width="14" height="10" viewBox="0 0 14 10"><path d="M3.4 7.2L7 3.6L10.6 7.2Z" fill="#a3a3a3"/></svg>
<svg class="r" style="left:1318px;top:718px" width="14" height="10" viewBox="0 0 14 10"><path d="M3.4 3.4L7 7L10.6 3.4Z" fill="#505050"/></svg>
<div class="r" style="left:0px;top:728px;width:1333px;height:1px;background:#d9d9d9;"></div>
</body></html>
